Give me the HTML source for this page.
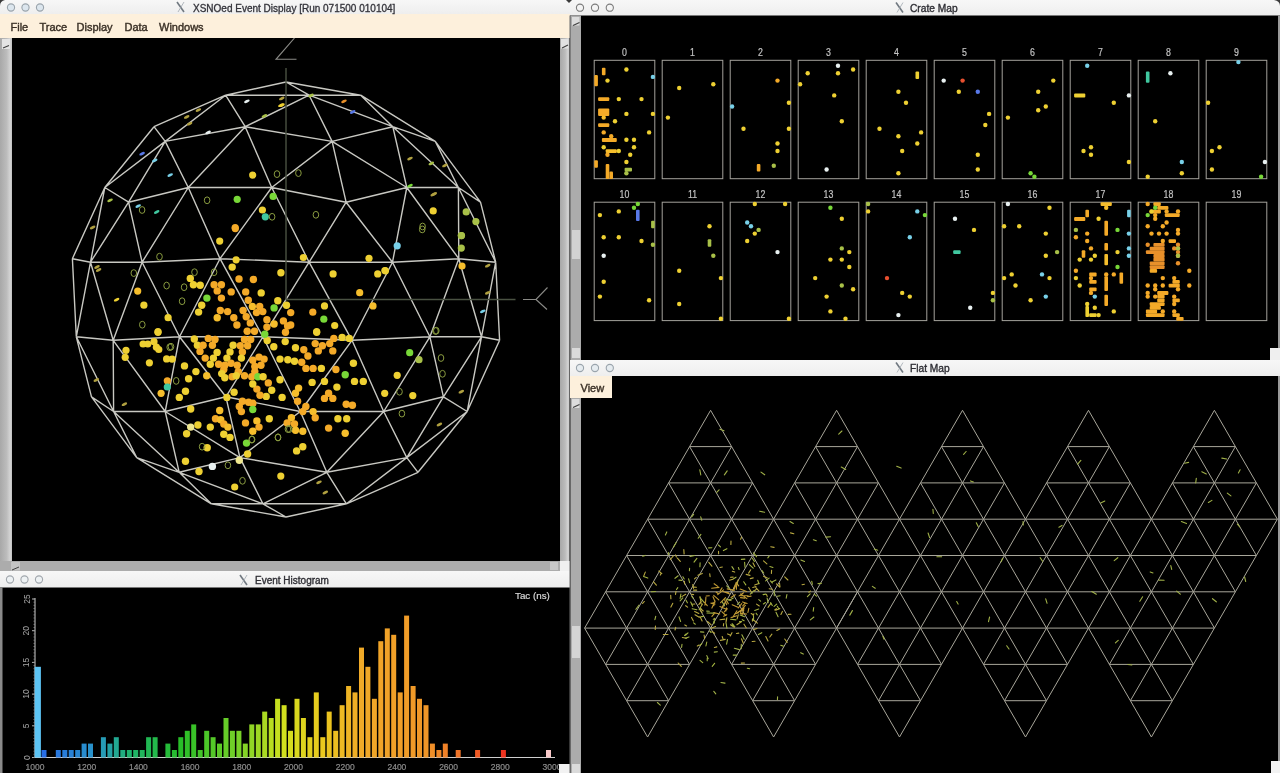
<!DOCTYPE html>
<html><head><meta charset="utf-8"><title>SNOed</title>
<style>
html,body{margin:0;padding:0;background:#000;width:1280px;height:773px;overflow:hidden;font-family:"Liberation Sans",sans-serif;}
.abs{position:absolute;}
svg{position:absolute;left:0;top:0;will-change:transform;}
</style></head><body>
<svg width="1280" height="773" viewBox="0 0 1280 773" style="font-family:'Liberation Sans',sans-serif">
<defs>
<linearGradient id="tb" x1="0" y1="0" x2="0" y2="1"><stop offset="0" stop-color="#f7f7f7"/><stop offset="1" stop-color="#eeeeee"/></linearGradient>
<linearGradient id="sbv" x1="0" y1="0" x2="1" y2="0"><stop offset="0" stop-color="#a8a8a8"/><stop offset="0.55" stop-color="#bcbcbc"/><stop offset="0.85" stop-color="#d4d4d4"/><stop offset="1" stop-color="#c0c0c0"/></linearGradient>
<clipPath id="cl"><rect x="12" y="38" width="548" height="523"/></clipPath>
<clipPath id="cr"><rect x="581" y="15.5" width="696.5" height="344.5"/></clipPath>
<clipPath id="cf"><rect x="581" y="376" width="696.5" height="397"/></clipPath>
</defs>
<rect x="0" y="0" width="1280" height="773" fill="#000"/>

<!-- ============ LEFT MAIN WINDOW ============ -->
<rect x="0" y="0" width="570" height="14" fill="url(#tb)"/>
<rect x="0" y="14" width="570" height="24" fill="#fdf0dc"/>
<circle cx="11" cy="7.5" r="3.6" fill="#dce6ee" stroke="#9aa4ac" stroke-width="1.1"/><circle cx="25.5" cy="7.5" r="3.6" fill="#dce6ee" stroke="#9aa4ac" stroke-width="1.1"/><circle cx="40" cy="7.5" r="3.6" fill="#dce6ee" stroke="#9aa4ac" stroke-width="1.1"/>
<text x="193" y="11.5" font-size="10" fill="#33333a" stroke="#33333a" stroke-width="0.3">XSNOed Event Display [Run 071500 010104]</text>
<path d="M177 2 l7 10" stroke="#707880" stroke-width="1.6" fill="none"/><path d="M184 2 l-6 10" stroke="#a0a8b0" stroke-width="0.8" fill="none"/>
<text font-size="11" fill="#3a3026" stroke="#3a3026" stroke-width="0.4" y="31">
<tspan x="10.5">File</tspan><tspan x="39.5">Trace</tspan><tspan x="76.5">Display</tspan><tspan x="124.5">Data</tspan><tspan x="159">Windows</tspan></text>
<rect x="0" y="38" width="12" height="523" fill="url(#sbv)"/>
<rect x="2" y="39" width="8" height="10" fill="#e4e4e4"/><path d="M3 48 L9 45.5" stroke="#404040" stroke-width="1.1"/>
<rect x="560" y="38" width="9.5" height="523" fill="url(#sbv)"/>
<rect x="561" y="39" width="7.5" height="9.5" fill="#e2e2e2"/><path d="M562 48 L568 45" stroke="#404040" stroke-width="1.1"/>
<rect x="0" y="561" width="560" height="10" fill="#acacac"/>
<rect x="550" y="562" width="8" height="8" fill="#c8c8c8"/><rect x="11" y="562" width="9" height="8.5" fill="#c4c4c4"/><path d="M12 570 L19 567" stroke="#404040" stroke-width="1"/>
<rect x="560" y="561" width="10" height="10" fill="#f0f0f0"/>

<g clip-path="url(#cl)">
<path d="M435.3 141.4L458.4 187.5M480.5 202.2L458.4 187.5M435.3 141.4L480.5 202.2M435.3 141.4L392.8 126.7M458.4 187.5L392.8 126.7M392.8 126.7L406.8 187.5M458.4 187.5L406.8 187.5M392.8 126.7L332.1 141.4M332.1 141.4L406.8 187.5M332.1 141.4L346.1 202.2M406.8 187.5L346.1 202.2M360.7 95.2L392.8 126.7M360.7 95.2L435.3 141.4M360.7 95.2L309.1 95.2M309.1 95.2L392.8 126.7M309.1 95.2L332.1 141.4M286 82L309.1 95.2M286 82L360.7 95.2M495.7 262.2L458.4 187.5M480.5 202.2L495.7 262.2M458.4 187.5L458.8 258.7M495.7 262.2L458.8 258.7M481.5 336.8L458.8 258.7M495.7 262.2L481.5 336.8M458.8 258.7L429.9 336.8M481.5 336.8L429.9 336.8M443.4 396.8L429.9 336.8M481.5 336.8L443.4 396.8M458.8 258.7L406.8 187.5M406.8 187.5L392.5 262.2M458.8 258.7L392.5 262.2M429.9 336.8L392.5 262.2M346.1 202.2L392.5 262.2M495.7 262.2L495.7 262.2M495.7 262.2L480.5 202.2M499.6 340.3L495.7 262.2M495.7 262.2L499.6 340.3M467.2 411.5L499.6 340.3M499.6 340.3L481.5 336.8M467.2 411.5L481.5 336.8M499.6 340.3L467.2 411.5M467.2 411.5L467.2 411.5M467.2 411.5L443.4 396.8M467.2 411.5L418 472.3M346.4 503.8L418 472.3M418 472.3L346.4 503.8M346.4 503.8L346.4 503.8M286 517L346.4 503.8M346.4 503.8L286 517M418 472.3L467.2 411.5M467.2 411.5L406.8 457.6M418 472.3L406.8 457.6M346.4 503.8L406.8 457.6M406.8 457.6L443.4 396.8M225.6 95.2L286 82M76.3 336.8L91.5 396.8M91.5 396.8L136.7 457.6M136.7 457.6L211.3 503.8M211.3 503.8L286 517M104.8 187.5L165.2 141.4M104.8 187.5L128.6 202.2M165.2 141.4L128.6 202.2M154 126.7L165.2 141.4M154 126.7L104.8 187.5M104.8 187.5L154 126.7M104.8 187.5L104.8 187.5M154 126.7L225.6 95.2M225.6 95.2L165.2 141.4M225.6 95.2L225.6 95.2M225.6 95.2L154 126.7M286 82L225.6 95.2M104.8 187.5L90.5 262.2M90.5 262.2L128.6 202.2M72.4 258.7L104.8 187.5M72.4 258.7L90.5 262.2M72.4 258.7L76.3 336.8M76.3 336.8L90.5 262.2M76.3 336.8L72.4 258.7M76.3 336.8L76.3 336.8M91.5 396.8L76.3 336.8M104.8 187.5L72.4 258.7M90.5 262.2L142.1 262.2M128.6 202.2L142.1 262.2M90.5 262.2L113.2 340.3M113.2 340.3L142.1 262.2M113.2 340.3L179.5 336.8M142.1 262.2L179.5 336.8M113.2 340.3L165.2 411.5M165.2 411.5L179.5 336.8M165.2 411.5L225.9 396.8M225.9 396.8L179.5 336.8M76.3 336.8L113.2 340.3M76.3 336.8L113.6 411.5M113.6 411.5L113.2 340.3M113.6 411.5L165.2 411.5M91.5 396.8L113.6 411.5M165.2 411.5L239.9 457.6M239.9 457.6L225.9 396.8M179.2 472.3L165.2 411.5M179.2 472.3L239.9 457.6M262.9 503.8L179.2 472.3M262.9 503.8L239.9 457.6M211.3 503.8L179.2 472.3M211.3 503.8L262.9 503.8M286 517L262.9 503.8M113.6 411.5L179.2 472.3M136.7 457.6L113.6 411.5M136.7 457.6L179.2 472.3M332.1 141.4L271.7 187.5M346.1 202.2L271.7 187.5M245.2 126.7L332.1 141.4M245.2 126.7L271.7 187.5M245.2 126.7L188.3 187.5M188.3 187.5L271.7 187.5M165.2 141.4L245.2 126.7M165.2 141.4L188.3 187.5M128.6 202.2L188.3 187.5M309.1 95.2L245.2 126.7M225.6 95.2L309.1 95.2M225.6 95.2L245.2 126.7M271.7 187.5L309.1 262.2M346.1 202.2L309.1 262.2M271.7 187.5L220 258.7M220 258.7L309.1 262.2M220 258.7L262.9 336.8M262.9 336.8L309.1 262.2M179.5 336.8L220 258.7M179.5 336.8L262.9 336.8M225.9 396.8L262.9 336.8M188.3 187.5L220 258.7M142.1 262.2L188.3 187.5M142.1 262.2L220 258.7M392.5 262.2L309.1 262.2M352 340.3L309.1 262.2M392.5 262.2L352 340.3M429.9 336.8L352 340.3M383.7 411.5L352 340.3M383.7 411.5L429.9 336.8M443.4 396.8L383.7 411.5M352 340.3L262.9 336.8M300.3 411.5L262.9 336.8M300.3 411.5L352 340.3M383.7 411.5L300.3 411.5M225.9 396.8L300.3 411.5M406.8 457.6L383.7 411.5M326.8 472.3L383.7 411.5M406.8 457.6L326.8 472.3M346.4 503.8L326.8 472.3M262.9 503.8L326.8 472.3M346.4 503.8L262.9 503.8M326.8 472.3L300.3 411.5M239.9 457.6L300.3 411.5M326.8 472.3L239.9 457.6" stroke="#c8c8c2" stroke-width="1.4" fill="none"/>
<path d="M286 68 V299.5 H515.5" stroke="#4a5242" stroke-width="1.4" fill="none"/>
<path d="M294.5 38 L276 59.3 H296.5" stroke="#8a8a86" stroke-width="1.1" fill="none"/>
<path d="M523 299.5 H536 L547.5 287.5 M536 299.5 L547 309.5" stroke="#8a8a86" stroke-width="1.1" fill="none"/>
<circle cx="235.3" cy="228.6" r="3.6" fill="#f4aa28"/><circle cx="219.7" cy="241.1" r="3.6" fill="#eed032"/><circle cx="236.1" cy="259.8" r="3.6" fill="#eed032"/><circle cx="137.7" cy="291.1" r="3.6" fill="#f6be2c"/><circle cx="143.9" cy="305.2" r="3.6" fill="#eed032"/><circle cx="168.1" cy="317.7" r="3.6" fill="#eed032"/><circle cx="158" cy="331.7" r="3.6" fill="#eed032"/><circle cx="303.4" cy="257.5" r="3.6" fill="#eed032"/><circle cx="369" cy="258.3" r="3.6" fill="#eed032"/><circle cx="333.1" cy="273.9" r="3.6" fill="#eed032"/><circle cx="377.7" cy="273.9" r="3.6" fill="#eed032"/><circle cx="385.5" cy="270.8" r="3.6" fill="#eed032"/><circle cx="359.7" cy="292.7" r="3.6" fill="#f6be2c"/><circle cx="373" cy="305.9" r="3.6" fill="#f6be2c"/><circle cx="312.8" cy="312.2" r="3.6" fill="#f4aa28"/><circle cx="324.5" cy="305.9" r="3.6" fill="#eed032"/><circle cx="323.8" cy="319.2" r="3.6" fill="#78d838"/><circle cx="334.7" cy="325.5" r="3.6" fill="#eed032"/><circle cx="316.7" cy="331.7" r="3.6" fill="#eed032"/><circle cx="397.2" cy="245.8" r="3.6" fill="#78d0e8"/><circle cx="461.3" cy="235.6" r="3.6" fill="#a8c048"/><circle cx="461.3" cy="248.1" r="3.6" fill="#a8c048"/><circle cx="462" cy="266" r="3.6" fill="#f6be2c"/><circle cx="158" cy="332.3" r="3.6" fill="#eed032"/><circle cx="143.1" cy="344" r="3.6" fill="#eed032"/><circle cx="147.8" cy="344" r="3.6" fill="#eed032"/><circle cx="154" cy="341.7" r="3.6" fill="#eed032"/><circle cx="156.4" cy="347.2" r="3.6" fill="#eed032"/><circle cx="158.8" cy="349.5" r="3.6" fill="#eed032"/><circle cx="126" cy="350.3" r="3.6" fill="#eed032"/><circle cx="125.2" cy="357.3" r="3.6" fill="#eed032"/><circle cx="149.4" cy="362.8" r="3.6" fill="#eed032"/><circle cx="166.6" cy="358.9" r="3.6" fill="#eed032"/><circle cx="161.1" cy="393.3" r="3.6" fill="#f6be2c"/><circle cx="167.3" cy="380.8" r="3.6" fill="#f4aa28"/><circle cx="167.3" cy="387" r="3.6" fill="#40c8a0"/><circle cx="316.7" cy="332.3" r="3.6" fill="#eed032"/><circle cx="409.7" cy="352.7" r="3.6" fill="#78d838"/><circle cx="419" cy="359.7" r="3.6" fill="#a8c048"/><circle cx="397.2" cy="375.3" r="3.6" fill="#eed032"/><circle cx="384.7" cy="393.3" r="3.6" fill="#eed032"/><circle cx="412.8" cy="395.6" r="3.6" fill="#eed032"/><circle cx="280.8" cy="476.1" r="3.6" fill="#eed032"/><circle cx="234.7" cy="487" r="3.6" fill="#eed032"/><circle cx="252.7" cy="175.1" r="3.6" fill="#eed032"/><circle cx="237.2" cy="199.3" r="3.6" fill="#78d838"/><circle cx="273.1" cy="196.4" r="3.6" fill="#78d838"/><circle cx="262.4" cy="210" r="3.6" fill="#eed032"/><circle cx="265.3" cy="216.8" r="3.6" fill="#40c8a0"/><circle cx="235.2" cy="227.5" r="3.6" fill="#f4aa28"/><circle cx="433.2" cy="210.9" r="3.6" fill="#eed032"/><circle cx="466.2" cy="211.9" r="3.6" fill="#a8c048"/><circle cx="475.9" cy="221.6" r="3.6" fill="#a8c048"/><circle cx="461.5" cy="235.6" r="3.6" fill="#a8c048"/><circle cx="384.9" cy="270.5" r="3.6" fill="#eed032"/><circle cx="194.3" cy="339" r="3.7" fill="#eed032"/><circle cx="208.3" cy="338.4" r="3.7" fill="#f4aa28"/><circle cx="215" cy="339.5" r="3.7" fill="#f4aa28"/><circle cx="197.4" cy="345.2" r="3.7" fill="#eed032"/><circle cx="203.1" cy="345.2" r="3.7" fill="#f4aa28"/><circle cx="212.4" cy="345.2" r="3.7" fill="#f4aa28"/><circle cx="200" cy="351.4" r="3.7" fill="#f4aa28"/><circle cx="217.1" cy="352.4" r="3.7" fill="#eed032"/><circle cx="205.2" cy="358.1" r="3.7" fill="#f4aa28"/><circle cx="213.4" cy="358.1" r="3.7" fill="#eed032"/><circle cx="210.3" cy="364.3" r="3.7" fill="#eed032"/><circle cx="218.6" cy="364.3" r="3.7" fill="#f4aa28"/><circle cx="224.8" cy="365.3" r="3.7" fill="#f4aa28"/><circle cx="233.1" cy="345.2" r="3.7" fill="#eed032"/><circle cx="240.3" cy="345.7" r="3.7" fill="#f4aa28"/><circle cx="244.5" cy="339.5" r="3.7" fill="#f4aa28"/><circle cx="250.7" cy="339.5" r="3.7" fill="#f4aa28"/><circle cx="247.6" cy="345.7" r="3.7" fill="#f4aa28"/><circle cx="230" cy="351.9" r="3.7" fill="#eed032"/><circle cx="242.4" cy="351.9" r="3.7" fill="#f4aa28"/><circle cx="226.9" cy="358.1" r="3.7" fill="#eed032"/><circle cx="241.4" cy="358.1" r="3.7" fill="#eed032"/><circle cx="223.8" cy="369.5" r="3.7" fill="#f4aa28"/><circle cx="231" cy="363.3" r="3.7" fill="#f4aa28"/><circle cx="237.2" cy="365.3" r="3.7" fill="#f4aa28"/><circle cx="238.3" cy="371.6" r="3.7" fill="#f4aa28"/><circle cx="221.7" cy="373.6" r="3.7" fill="#eed032"/><circle cx="224.8" cy="377.8" r="3.7" fill="#eed032"/><circle cx="232.1" cy="376.7" r="3.7" fill="#f4aa28"/><circle cx="236.2" cy="375.7" r="3.7" fill="#eed032"/><circle cx="244.5" cy="375.7" r="3.7" fill="#f4aa28"/><circle cx="251.7" cy="376.7" r="3.7" fill="#f4aa28"/><circle cx="252.8" cy="360.2" r="3.7" fill="#f4aa28"/><circle cx="259" cy="357.1" r="3.7" fill="#f4aa28"/><circle cx="264.1" cy="359.1" r="3.7" fill="#f4aa28"/><circle cx="261" cy="365.3" r="3.7" fill="#f4aa28"/><circle cx="254.8" cy="366.4" r="3.7" fill="#f4aa28"/><circle cx="254.8" cy="371.6" r="3.7" fill="#f4aa28"/><circle cx="257.9" cy="376.7" r="3.7" fill="#78d838"/><circle cx="263.1" cy="376.7" r="3.7" fill="#eed032"/><circle cx="268.3" cy="382.9" r="3.7" fill="#f4aa28"/><circle cx="266.2" cy="396.4" r="3.7" fill="#eed032"/><circle cx="260" cy="395.3" r="3.7" fill="#f4aa28"/><circle cx="256.9" cy="389.1" r="3.7" fill="#f4aa28"/><circle cx="252.8" cy="384" r="3.7" fill="#eed032"/><circle cx="184.5" cy="365.9" r="3.7" fill="#eed032"/><circle cx="195.9" cy="371.6" r="3.7" fill="#eed032"/><circle cx="188.6" cy="378.8" r="3.7" fill="#eed032"/><circle cx="206.7" cy="375.7" r="3.7" fill="#f6be2c"/><circle cx="185.5" cy="391.2" r="3.7" fill="#eed032"/><circle cx="179.3" cy="397.4" r="3.7" fill="#eed032"/><circle cx="234.1" cy="392.2" r="3.7" fill="#eed032"/><circle cx="226.9" cy="397.4" r="3.7" fill="#eed032"/><circle cx="172.1" cy="359.1" r="3.7" fill="#eed032"/><circle cx="267.2" cy="340.5" r="3.7" fill="#eed032"/><circle cx="232.2" cy="267.1" r="3.7" fill="#eed032"/><circle cx="239" cy="279" r="3.7" fill="#f4aa28"/><circle cx="253.4" cy="279.5" r="3.7" fill="#f4aa28"/><circle cx="280.9" cy="272.8" r="3.7" fill="#eed032"/><circle cx="190.3" cy="278.4" r="3.7" fill="#eed032"/><circle cx="193.4" cy="284.7" r="3.7" fill="#eed032"/><circle cx="200.2" cy="285.2" r="3.7" fill="#eed032"/><circle cx="214.1" cy="284.7" r="3.7" fill="#f4aa28"/><circle cx="221.4" cy="284.7" r="3.7" fill="#f4aa28"/><circle cx="217.2" cy="290.9" r="3.7" fill="#f4aa28"/><circle cx="221.4" cy="298.1" r="3.7" fill="#f4aa28"/><circle cx="206.9" cy="298.1" r="3.7" fill="#78d838"/><circle cx="201.7" cy="305.3" r="3.7" fill="#eed032"/><circle cx="198.6" cy="312.1" r="3.7" fill="#eed032"/><circle cx="231.2" cy="291.9" r="3.7" fill="#f4aa28"/><circle cx="245.7" cy="291.9" r="3.7" fill="#f4aa28"/><circle cx="261.2" cy="292.9" r="3.7" fill="#eed032"/><circle cx="277.8" cy="300.7" r="3.7" fill="#eed032"/><circle cx="274.1" cy="307.9" r="3.7" fill="#78d838"/><circle cx="286.5" cy="305.3" r="3.7" fill="#eed032"/><circle cx="290.7" cy="312.6" r="3.7" fill="#f4aa28"/><circle cx="248.3" cy="300.2" r="3.7" fill="#f4aa28"/><circle cx="252.4" cy="306.4" r="3.7" fill="#f6be2c"/><circle cx="259.7" cy="306.4" r="3.7" fill="#f4aa28"/><circle cx="256.5" cy="312.6" r="3.7" fill="#f4aa28"/><circle cx="262.8" cy="311.6" r="3.7" fill="#f4aa28"/><circle cx="266.9" cy="319.8" r="3.7" fill="#f4aa28"/><circle cx="266.9" cy="327.1" r="3.7" fill="#f4aa28"/><circle cx="274.1" cy="324" r="3.7" fill="#f6be2c"/><circle cx="283.4" cy="320.9" r="3.7" fill="#f4aa28"/><circle cx="287.6" cy="326" r="3.7" fill="#f4aa28"/><circle cx="285.5" cy="332.2" r="3.7" fill="#f4aa28"/><circle cx="290.7" cy="325" r="3.7" fill="#f4aa28"/><circle cx="220.3" cy="310.5" r="3.7" fill="#f4aa28"/><circle cx="227.6" cy="311.6" r="3.7" fill="#f4aa28"/><circle cx="217.2" cy="317.8" r="3.7" fill="#f6be2c"/><circle cx="233.8" cy="317.8" r="3.7" fill="#f4aa28"/><circle cx="236.9" cy="325" r="3.7" fill="#f4aa28"/><circle cx="243.1" cy="310.5" r="3.7" fill="#f4aa28"/><circle cx="246.2" cy="316.7" r="3.7" fill="#f4aa28"/><circle cx="250.3" cy="322.9" r="3.7" fill="#f4aa28"/><circle cx="247.2" cy="331.2" r="3.7" fill="#f4aa28"/><circle cx="254.5" cy="331.2" r="3.7" fill="#f4aa28"/><circle cx="264.8" cy="334.3" r="3.7" fill="#78d838"/><circle cx="273.8" cy="346.7" r="3.7" fill="#eed032"/><circle cx="285.2" cy="341.6" r="3.7" fill="#eed032"/><circle cx="295.5" cy="347.8" r="3.7" fill="#eed032"/><circle cx="303.8" cy="349.8" r="3.7" fill="#f4aa28"/><circle cx="307.9" cy="356" r="3.7" fill="#f4aa28"/><circle cx="294.5" cy="361.2" r="3.7" fill="#eed032"/><circle cx="301.7" cy="362.2" r="3.7" fill="#f4aa28"/><circle cx="305.9" cy="368.4" r="3.7" fill="#f4aa28"/><circle cx="313.1" cy="368.4" r="3.7" fill="#f4aa28"/><circle cx="321.4" cy="368.4" r="3.7" fill="#eed032"/><circle cx="280" cy="359.1" r="3.7" fill="#eed032"/><circle cx="287.8" cy="359.7" r="3.7" fill="#eed032"/><circle cx="315.2" cy="343.6" r="3.7" fill="#f4aa28"/><circle cx="322.4" cy="345.7" r="3.7" fill="#f4aa28"/><circle cx="318.3" cy="350.9" r="3.7" fill="#f4aa28"/><circle cx="329.7" cy="343.6" r="3.7" fill="#f4aa28"/><circle cx="333.8" cy="338.4" r="3.7" fill="#f4aa28"/><circle cx="332.8" cy="350.9" r="3.7" fill="#f4aa28"/><circle cx="342.1" cy="337.4" r="3.7" fill="#eed032"/><circle cx="349.3" cy="338.4" r="3.7" fill="#eed032"/><circle cx="353.4" cy="363.3" r="3.7" fill="#eed032"/><circle cx="335.9" cy="369.5" r="3.7" fill="#f4aa28"/><circle cx="345.2" cy="374.7" r="3.7" fill="#78d838"/><circle cx="354.5" cy="381.4" r="3.7" fill="#eed032"/><circle cx="363.3" cy="381.4" r="3.7" fill="#eed032"/><circle cx="324.5" cy="381.4" r="3.7" fill="#eed032"/><circle cx="312.1" cy="382.4" r="3.7" fill="#eed032"/><circle cx="336.9" cy="387.1" r="3.7" fill="#eed032"/><circle cx="328.6" cy="393.3" r="3.7" fill="#f4aa28"/><circle cx="324.5" cy="398.4" r="3.7" fill="#f4aa28"/><circle cx="332.8" cy="398.4" r="3.7" fill="#f4aa28"/><circle cx="298.6" cy="388.1" r="3.7" fill="#f6be2c"/><circle cx="295.5" cy="393.3" r="3.7" fill="#f6be2c"/><circle cx="280" cy="379.8" r="3.7" fill="#eed032"/><circle cx="282.1" cy="397.4" r="3.7" fill="#eed032"/><circle cx="271.7" cy="390.2" r="3.7" fill="#eed032"/><circle cx="190.7" cy="409" r="3.7" fill="#eed032"/><circle cx="219.7" cy="410.5" r="3.7" fill="#f6be2c"/><circle cx="215.5" cy="418.8" r="3.7" fill="#f4aa28"/><circle cx="220.7" cy="419.8" r="3.7" fill="#f6be2c"/><circle cx="223.8" cy="424" r="3.7" fill="#f4aa28"/><circle cx="227.9" cy="427.1" r="3.7" fill="#f6be2c"/><circle cx="197.9" cy="425" r="3.7" fill="#eed032"/><circle cx="210.3" cy="427.1" r="3.7" fill="#eed032"/><circle cx="190.7" cy="427.1" r="3.7" fill="#f0e890"/><circle cx="186.6" cy="433.8" r="3.7" fill="#eed032"/><circle cx="223.8" cy="434.3" r="3.7" fill="#eed032"/><circle cx="230" cy="437.4" r="3.7" fill="#eed032"/><circle cx="242.4" cy="401.2" r="3.7" fill="#f4aa28"/><circle cx="239.3" cy="406.4" r="3.7" fill="#f4aa28"/><circle cx="241.4" cy="411.6" r="3.7" fill="#f4aa28"/><circle cx="248.6" cy="402.2" r="3.7" fill="#f4aa28"/><circle cx="252.8" cy="403.3" r="3.7" fill="#f4aa28"/><circle cx="252.8" cy="409.5" r="3.7" fill="#78d838"/><circle cx="269.3" cy="418.8" r="3.7" fill="#eed032"/><circle cx="245.5" cy="422.9" r="3.7" fill="#f4aa28"/><circle cx="256.9" cy="420.9" r="3.7" fill="#f6be2c"/><circle cx="259" cy="427.1" r="3.7" fill="#f4aa28"/><circle cx="252.8" cy="431.2" r="3.7" fill="#f6be2c"/><circle cx="246.5" cy="443.1" r="3.7" fill="#78d838"/><circle cx="247.6" cy="454" r="3.7" fill="#eed032"/><circle cx="239.3" cy="460.2" r="3.7" fill="#f0e890"/><circle cx="207.2" cy="447.8" r="3.7" fill="#eed032"/><circle cx="185.5" cy="461.2" r="3.7" fill="#eed032"/><circle cx="212.4" cy="466.4" r="3.7" fill="#e8f0f0"/><circle cx="199" cy="471.5" r="3.7" fill="#eed032"/><circle cx="297.6" cy="401.2" r="3.7" fill="#f4aa28"/><circle cx="291.4" cy="417.8" r="3.7" fill="#f6be2c"/><circle cx="287.2" cy="422.9" r="3.7" fill="#f4aa28"/><circle cx="294.5" cy="424" r="3.7" fill="#f4aa28"/><circle cx="295.5" cy="430.2" r="3.7" fill="#f6be2c"/><circle cx="302.8" cy="431.2" r="3.7" fill="#f6be2c"/><circle cx="305.9" cy="406.4" r="3.7" fill="#f4aa28"/><circle cx="302.8" cy="411.6" r="3.7" fill="#f4aa28"/><circle cx="313.1" cy="411.6" r="3.7" fill="#f6be2c"/><circle cx="315.2" cy="417.8" r="3.7" fill="#f4aa28"/><circle cx="346.2" cy="404.3" r="3.7" fill="#f4aa28"/><circle cx="352.4" cy="405.3" r="3.7" fill="#f4aa28"/><circle cx="337.9" cy="418.8" r="3.7" fill="#eed032"/><circle cx="346.7" cy="418.8" r="3.7" fill="#eed032"/><circle cx="328.6" cy="428.1" r="3.7" fill="#f4aa28"/><circle cx="345.2" cy="433.3" r="3.7" fill="#f6be2c"/><circle cx="296.6" cy="450.9" r="3.7" fill="#eed032"/><circle cx="302.8" cy="446.7" r="3.7" fill="#eed032"/><ellipse cx="154.7" cy="160.5" rx="3" ry="1.4" fill="#78d0e8" transform="rotate(-25 154.7 160.5)"/><ellipse cx="170.2" cy="175.1" rx="3" ry="1.4" fill="#78d0e8" transform="rotate(-25 170.2 175.1)"/><ellipse cx="246.9" cy="101.3" rx="3" ry="1.4" fill="#e8f0f0" transform="rotate(-25 246.9 101.3)"/><ellipse cx="280.9" cy="105.2" rx="3" ry="1.4" fill="#eed032" transform="rotate(-25 280.9 105.2)"/><ellipse cx="281.8" cy="98.4" rx="3" ry="1.4" fill="#b0a040" transform="rotate(-25 281.8 98.4)"/><ellipse cx="264.4" cy="115.9" rx="3" ry="1.4" fill="#a8c048" transform="rotate(-25 264.4 115.9)"/><ellipse cx="208.1" cy="132.4" rx="3" ry="1.4" fill="#e8f0f0" transform="rotate(-25 208.1 132.4)"/><ellipse cx="186.7" cy="116.9" rx="3" ry="1.4" fill="#b0a040" transform="rotate(-25 186.7 116.9)"/><ellipse cx="198.4" cy="110.1" rx="3" ry="1.4" fill="#b0a040" transform="rotate(-25 198.4 110.1)"/><ellipse cx="189.6" cy="123.7" rx="3" ry="1.4" fill="#b0a040" transform="rotate(-25 189.6 123.7)"/><ellipse cx="142.1" cy="153.7" rx="3" ry="1.4" fill="#5878e8" transform="rotate(-25 142.1 153.7)"/><ellipse cx="110.1" cy="200.3" rx="3" ry="1.4" fill="#a8c048" transform="rotate(-25 110.1 200.3)"/><ellipse cx="138.2" cy="206.1" rx="3" ry="1.4" fill="#78d0e8" transform="rotate(-25 138.2 206.1)"/><ellipse cx="156.7" cy="212" rx="3" ry="1.4" fill="#40c8a0" transform="rotate(-25 156.7 212)"/><ellipse cx="92.6" cy="227.5" rx="3" ry="1.4" fill="#b0a040" transform="rotate(-25 92.6 227.5)"/><ellipse cx="344" cy="101.3" rx="3" ry="1.4" fill="#e8902a" transform="rotate(-25 344 101.3)"/><ellipse cx="352.7" cy="112" rx="3" ry="1.4" fill="#5878e8" transform="rotate(-25 352.7 112)"/><ellipse cx="282" cy="105.2" rx="3" ry="1.4" fill="#eed032" transform="rotate(-25 282 105.2)"/><ellipse cx="311" cy="95.5" rx="3" ry="1.4" fill="#a8c048" transform="rotate(-25 311 95.5)"/><ellipse cx="410" cy="185.7" rx="3" ry="1.4" fill="#78d838" transform="rotate(-25 410 185.7)"/><ellipse cx="410" cy="158.6" rx="3" ry="1.4" fill="#b0a040" transform="rotate(-25 410 158.6)"/><ellipse cx="431.3" cy="163.4" rx="3" ry="1.4" fill="#a8c048" transform="rotate(-25 431.3 163.4)"/><ellipse cx="433.2" cy="194.5" rx="3" ry="1.4" fill="#b0a040" transform="rotate(-25 433.2 194.5)"/><ellipse cx="444.9" cy="165.4" rx="3" ry="1.4" fill="#b0a040" transform="rotate(-25 444.9 165.4)"/><ellipse cx="487.7" cy="265.7" rx="3" ry="1.4" fill="#b0a040" transform="rotate(-25 487.7 265.7)"/><ellipse cx="487.7" cy="292.8" rx="3" ry="1.4" fill="#b0a040" transform="rotate(-25 487.7 292.8)"/><ellipse cx="482.8" cy="311.3" rx="3" ry="1.4" fill="#78d0e8" transform="rotate(-25 482.8 311.3)"/><ellipse cx="434.3" cy="193.9" rx="3" ry="1.4" fill="#b0a040" transform="rotate(-25 434.3 193.9)"/><ellipse cx="461.3" cy="391.7" rx="3" ry="1.4" fill="#b0a040" transform="rotate(-25 461.3 391.7)"/><ellipse cx="439.4" cy="424.5" rx="3" ry="1.4" fill="#b0a040" transform="rotate(-25 439.4 424.5)"/><ellipse cx="319" cy="482.3" rx="3" ry="1.4" fill="#b0a040" transform="rotate(-25 319 482.3)"/><ellipse cx="325.3" cy="492.5" rx="3" ry="1.4" fill="#b0a040" transform="rotate(-25 325.3 492.5)"/><ellipse cx="124.4" cy="404.2" rx="3" ry="1.4" fill="#b0a040" transform="rotate(-25 124.4 404.2)"/><ellipse cx="96.3" cy="380" rx="3" ry="1.4" fill="#b0a040" transform="rotate(-25 96.3 380)"/><ellipse cx="98.6" cy="270" rx="3" ry="1.4" fill="#b0a040" transform="rotate(-25 98.6 270)"/><ellipse cx="97" cy="267" rx="3" ry="1.4" fill="#b0a040" transform="rotate(-25 97 267)"/><ellipse cx="116.6" cy="299.7" rx="3" ry="1.4" fill="#eed032" transform="rotate(-25 116.6 299.7)"/><ellipse cx="159.5" cy="256.7" rx="2.8" ry="3.4" fill="none" stroke="#8a9c40" stroke-width="1"/><ellipse cx="133.8" cy="273.1" rx="2.8" ry="3.4" fill="none" stroke="#8a9c40" stroke-width="1"/><ellipse cx="166.6" cy="285.6" rx="2.8" ry="3.4" fill="none" stroke="#8a9c40" stroke-width="1"/><ellipse cx="142.3" cy="324.7" rx="2.8" ry="3.4" fill="none" stroke="#8a9c40" stroke-width="1"/><ellipse cx="422.2" cy="229.4" rx="2.8" ry="3.4" fill="none" stroke="#8a9c40" stroke-width="1"/><ellipse cx="435.5" cy="331" rx="2.8" ry="3.4" fill="none" stroke="#8a9c40" stroke-width="1"/><ellipse cx="169.7" cy="347.2" rx="2.8" ry="3.4" fill="none" stroke="#8a9c40" stroke-width="1"/><ellipse cx="399.5" cy="391.7" rx="2.8" ry="3.4" fill="none" stroke="#8a9c40" stroke-width="1"/><ellipse cx="401.9" cy="413.6" rx="2.8" ry="3.4" fill="none" stroke="#8a9c40" stroke-width="1"/><ellipse cx="442.5" cy="373.8" rx="2.8" ry="3.4" fill="none" stroke="#8a9c40" stroke-width="1"/><ellipse cx="441" cy="358" rx="2.8" ry="3.4" fill="none" stroke="#8a9c40" stroke-width="1"/><ellipse cx="242.5" cy="480.8" rx="2.8" ry="3.4" fill="none" stroke="#8a9c40" stroke-width="1"/><ellipse cx="277" cy="174.1" rx="2.8" ry="3.4" fill="none" stroke="#8a9c40" stroke-width="1"/><ellipse cx="207.1" cy="200.3" rx="2.8" ry="3.4" fill="none" stroke="#8a9c40" stroke-width="1"/><ellipse cx="272.1" cy="216.8" rx="2.8" ry="3.4" fill="none" stroke="#8a9c40" stroke-width="1"/><ellipse cx="142.1" cy="210" rx="2.8" ry="3.4" fill="none" stroke="#8a9c40" stroke-width="1"/><ellipse cx="298.4" cy="173.1" rx="2.8" ry="3.4" fill="none" stroke="#8a9c40" stroke-width="1"/><ellipse cx="315.9" cy="214.8" rx="2.8" ry="3.4" fill="none" stroke="#8a9c40" stroke-width="1"/><ellipse cx="422.6" cy="226.5" rx="2.8" ry="3.4" fill="none" stroke="#8a9c40" stroke-width="1"/><ellipse cx="436.3" cy="330.7" rx="2.8" ry="3.4" fill="none" stroke="#8a9c40" stroke-width="1"/><ellipse cx="176.2" cy="380.9" rx="2.8" ry="3.4" fill="none" stroke="#8a9c40" stroke-width="1"/><ellipse cx="171" cy="346.7" rx="2.8" ry="3.4" fill="none" stroke="#8a9c40" stroke-width="1"/><ellipse cx="194.5" cy="272.2" rx="2.8" ry="3.4" fill="none" stroke="#8a9c40" stroke-width="1"/><ellipse cx="214.1" cy="272.2" rx="2.8" ry="3.4" fill="none" stroke="#8a9c40" stroke-width="1"/><ellipse cx="184.1" cy="287.2" rx="2.8" ry="3.4" fill="none" stroke="#8a9c40" stroke-width="1"/><ellipse cx="182.1" cy="301.2" rx="2.8" ry="3.4" fill="none" stroke="#8a9c40" stroke-width="1"/><ellipse cx="278.1" cy="437.4" rx="2.8" ry="3.4" fill="none" stroke="#8a9c40" stroke-width="1"/><ellipse cx="227.9" cy="465.3" rx="2.8" ry="3.4" fill="none" stroke="#8a9c40" stroke-width="1"/><ellipse cx="202.1" cy="446.7" rx="2.8" ry="3.4" fill="none" stroke="#8a9c40" stroke-width="1"/><ellipse cx="251.7" cy="439.5" rx="2.8" ry="3.4" fill="none" stroke="#8a9c40" stroke-width="1"/><ellipse cx="287.9" cy="429.1" rx="2.8" ry="3.4" fill="none" stroke="#8a9c40" stroke-width="1"/><ellipse cx="277.9" cy="437.4" rx="2.8" ry="3.4" fill="none" stroke="#8a9c40" stroke-width="1"/><ellipse cx="289.3" cy="429.1" rx="2.8" ry="3.4" fill="none" stroke="#8a9c40" stroke-width="1"/><ellipse cx="252.1" cy="439.5" rx="2.8" ry="3.4" fill="none" stroke="#8a9c40" stroke-width="1"/>

</g>
<!-- ============ HISTOGRAM WINDOW ============ -->
<rect x="0" y="571" width="570" height="16.5" fill="url(#tb)"/>
<circle cx="10" cy="579.5" r="3.6" fill="#eef2f4" stroke="#a0a6ac" stroke-width="1.1"/><circle cx="24.5" cy="579.5" r="3.6" fill="#eef2f4" stroke="#a0a6ac" stroke-width="1.1"/><circle cx="39" cy="579.5" r="3.6" fill="#eef2f4" stroke="#a0a6ac" stroke-width="1.1"/>
<text x="255" y="584" font-size="10" fill="#2e2e34" stroke="#2e2e34" stroke-width="0.35">Event Histogram</text>
<path d="M240 575 l7 10" stroke="#707880" stroke-width="1.6" fill="none"/><path d="M247 575 l-6 10" stroke="#a0a8b0" stroke-width="0.8" fill="none"/>
<rect x="0" y="587.5" width="2.5" height="186" fill="#8a8a8a"/>
<path d="M35 598 V757.5 H555" stroke="#cfcfcf" stroke-width="1" fill="none"/>
<rect x="34.6" y="666.8" width="6.3" height="90.7" fill="#5cc4f4"/><rect x="41.5" y="750" width="5" height="7.5" fill="#286ee6"/><rect x="55.8" y="750" width="5" height="7.5" fill="#2878de"/><rect x="62.3" y="750" width="5" height="7.5" fill="#287dda"/><rect x="68.7" y="750" width="5" height="7.5" fill="#2882d7"/><rect x="75.2" y="750" width="5" height="7.5" fill="#2887d3"/><rect x="81.6" y="743.6" width="5" height="13.9" fill="#288ccf"/><rect x="88" y="743.6" width="5" height="13.9" fill="#2891cb"/><rect x="100.9" y="737.2" width="5" height="20.3" fill="#269cb6"/><rect x="107.4" y="743.6" width="5" height="13.9" fill="#24a2a4"/><rect x="113.8" y="737.2" width="5" height="20.3" fill="#22a892"/><rect x="120.3" y="750" width="5" height="7.5" fill="#20ae80"/><rect x="126.8" y="750" width="5" height="7.5" fill="#1eb46e"/><rect x="133.2" y="750" width="5" height="7.5" fill="#1fb565"/><rect x="139.7" y="750" width="5" height="7.5" fill="#20b65c"/><rect x="146.1" y="737.2" width="5" height="20.3" fill="#21b753"/><rect x="152.6" y="737.2" width="5" height="20.3" fill="#23b94b"/><rect x="165.4" y="743.6" width="5" height="13.9" fill="#25bb39"/><rect x="171.9" y="750" width="5" height="7.5" fill="#26bc30"/><rect x="178.3" y="737.2" width="5" height="20.3" fill="#28be28"/><rect x="184.8" y="730.8" width="5" height="26.7" fill="#30c028"/><rect x="191.2" y="724.4" width="5" height="33.1" fill="#39c228"/><rect x="197.7" y="750" width="5" height="7.5" fill="#42c428"/><rect x="204.2" y="730.8" width="5" height="26.7" fill="#4bc628"/><rect x="210.6" y="737.2" width="5" height="20.3" fill="#54c928"/><rect x="217" y="743.6" width="5" height="13.9" fill="#5dcb28"/><rect x="223.5" y="718" width="5" height="39.5" fill="#66cd28"/><rect x="229.9" y="730.8" width="5" height="26.7" fill="#6fcf28"/><rect x="236.4" y="730.8" width="5" height="26.7" fill="#78d228"/><rect x="242.8" y="743.6" width="5" height="13.9" fill="#84d426"/><rect x="249.3" y="724.4" width="5" height="33.1" fill="#91d625"/><rect x="255.8" y="724.4" width="5" height="33.1" fill="#9ed823"/><rect x="262.2" y="711.6" width="5" height="45.9" fill="#abda22"/><rect x="268.7" y="718" width="5" height="39.5" fill="#b8dc20"/><rect x="275.1" y="698.8" width="5" height="58.7" fill="#c5de1f"/><rect x="281.6" y="705.2" width="5" height="52.3" fill="#d2e11e"/><rect x="288" y="730.8" width="5" height="26.7" fill="#d6dc1e"/><rect x="294.5" y="698.8" width="5" height="58.7" fill="#dad81e"/><rect x="300.9" y="718" width="5" height="39.5" fill="#ded41e"/><rect x="307.4" y="737.2" width="5" height="20.3" fill="#e2d01e"/><rect x="313.8" y="692.4" width="5" height="65.1" fill="#e6cc1e"/><rect x="320.3" y="737.2" width="5" height="20.3" fill="#ebc81e"/><rect x="326.7" y="711.6" width="5" height="45.9" fill="#ebc31f"/><rect x="333.2" y="730.8" width="5" height="26.7" fill="#ecbe21"/><rect x="339.6" y="705.2" width="5" height="52.3" fill="#edb923"/><rect x="346.1" y="686" width="5" height="71.5" fill="#eeb424"/><rect x="352.5" y="692.4" width="5" height="65.1" fill="#efaf26"/><rect x="359" y="647.6" width="5" height="109.9" fill="#f0aa28"/><rect x="365.4" y="666.8" width="5" height="90.7" fill="#f0a828"/><rect x="371.9" y="698.8" width="5" height="58.7" fill="#f0a628"/><rect x="378.3" y="641.2" width="5" height="116.3" fill="#f0a428"/><rect x="384.8" y="628.4" width="5" height="129.1" fill="#f0a228"/><rect x="391.2" y="634.8" width="5" height="122.7" fill="#f0a028"/><rect x="397.7" y="692.4" width="5" height="65.1" fill="#f09e28"/><rect x="404.1" y="615.6" width="5" height="141.9" fill="#f09c28"/><rect x="410.6" y="686" width="5" height="71.5" fill="#f09a28"/><rect x="417" y="698.8" width="5" height="58.7" fill="#f09828"/><rect x="423.5" y="705.2" width="5" height="52.3" fill="#f09628"/><rect x="429.9" y="743.6" width="5" height="13.9" fill="#f08f28"/><rect x="436.4" y="750" width="5" height="7.5" fill="#f08828"/><rect x="442.8" y="743.6" width="5" height="13.9" fill="#f08228"/><rect x="455.7" y="750" width="5" height="7.5" fill="#f07428"/><rect x="475.1" y="750" width="5" height="7.5" fill="#f05a24"/><rect x="500.9" y="750" width="5" height="7.5" fill="#f0321e"/><rect x="546" y="750" width="5" height="7.5" fill="#f8c8c8"/>
<text x="515" y="599" font-size="9.8" fill="#d8d8d8" stroke="#d8d8d8" stroke-width="0.2">Tac (ns)</text>
<text x="35.0" y="770" font-size="8.5" fill="#8c8c8c" text-anchor="middle" stroke="#8c8c8c" stroke-width="0.2">1000</text>
<text x="86.7" y="770" font-size="8.5" fill="#8c8c8c" text-anchor="middle" stroke="#8c8c8c" stroke-width="0.2">1200</text>
<text x="138.4" y="770" font-size="8.5" fill="#8c8c8c" text-anchor="middle" stroke="#8c8c8c" stroke-width="0.2">1400</text>
<text x="190.1" y="770" font-size="8.5" fill="#8c8c8c" text-anchor="middle" stroke="#8c8c8c" stroke-width="0.2">1600</text>
<text x="241.8" y="770" font-size="8.5" fill="#8c8c8c" text-anchor="middle" stroke="#8c8c8c" stroke-width="0.2">1800</text>
<text x="293.5" y="770" font-size="8.5" fill="#8c8c8c" text-anchor="middle" stroke="#8c8c8c" stroke-width="0.2">2000</text>
<text x="345.2" y="770" font-size="8.5" fill="#8c8c8c" text-anchor="middle" stroke="#8c8c8c" stroke-width="0.2">2200</text>
<text x="396.9" y="770" font-size="8.5" fill="#8c8c8c" text-anchor="middle" stroke="#8c8c8c" stroke-width="0.2">2400</text>
<text x="448.6" y="770" font-size="8.5" fill="#8c8c8c" text-anchor="middle" stroke="#8c8c8c" stroke-width="0.2">2600</text>
<text x="500.3" y="770" font-size="8.5" fill="#8c8c8c" text-anchor="middle" stroke="#8c8c8c" stroke-width="0.2">2800</text>
<text x="552.0" y="770" font-size="8.5" fill="#8c8c8c" text-anchor="middle" stroke="#8c8c8c" stroke-width="0.2">3000</text>
<text x="29.5" y="757.5" font-size="8.5" fill="#a8a8a8" text-anchor="middle" transform="rotate(-90 29.5 757.5)">0</text>
<path d="M32 757.5H35" stroke="#b0b0b0" stroke-width="1"/>
<text x="29.5" y="725.8" font-size="8.5" fill="#a8a8a8" text-anchor="middle" transform="rotate(-90 29.5 725.8)">5</text>
<path d="M32 725.8H35" stroke="#b0b0b0" stroke-width="1"/>
<text x="29.5" y="694.1" font-size="8.5" fill="#a8a8a8" text-anchor="middle" transform="rotate(-90 29.5 694.1)">10</text>
<path d="M32 694.1H35" stroke="#b0b0b0" stroke-width="1"/>
<text x="29.5" y="662.4" font-size="8.5" fill="#a8a8a8" text-anchor="middle" transform="rotate(-90 29.5 662.4)">15</text>
<path d="M32 662.4H35" stroke="#b0b0b0" stroke-width="1"/>
<text x="29.5" y="630.7" font-size="8.5" fill="#a8a8a8" text-anchor="middle" transform="rotate(-90 29.5 630.7)">20</text>
<path d="M32 630.7H35" stroke="#b0b0b0" stroke-width="1"/>
<text x="29.5" y="599.0" font-size="8.5" fill="#a8a8a8" text-anchor="middle" transform="rotate(-90 29.5 599.0)">25</text>
<path d="M32 599.0H35" stroke="#b0b0b0" stroke-width="1"/>
<path d="M33.5 757.5H35M33.5 754.3H35M33.5 751.2H35M33.5 748.0H35M33.5 744.8H35M33.5 741.6H35M33.5 738.5H35M33.5 735.3H35M33.5 732.1H35M33.5 729.0H35M33.5 725.8H35M33.5 722.6H35M33.5 719.5H35M33.5 716.3H35M33.5 713.1H35M33.5 710.0H35M33.5 706.8H35M33.5 703.6H35M33.5 700.4H35M33.5 697.3H35M33.5 694.1H35M33.5 690.9H35M33.5 687.8H35M33.5 684.6H35M33.5 681.4H35M33.5 678.2H35M33.5 675.1H35M33.5 671.9H35M33.5 668.7H35M33.5 665.6H35M33.5 662.4H35M33.5 659.2H35M33.5 656.1H35M33.5 652.9H35M33.5 649.7H35M33.5 646.5H35M33.5 643.4H35M33.5 640.2H35M33.5 637.0H35M33.5 633.9H35M33.5 630.7H35M33.5 627.5H35M33.5 624.4H35M33.5 621.2H35M33.5 618.0H35M33.5 614.9H35M33.5 611.7H35M33.5 608.5H35M33.5 605.3H35M33.5 602.2H35M33.5 599.0H35" stroke="#909090" stroke-width="0.8"/>
<rect x="559" y="764" width="11" height="9" fill="#f2f2f2"/>

<!-- ============ CRATE MAP WINDOW ============ -->
<rect x="570" y="0" width="710" height="15.5" fill="url(#tb)"/>
<circle cx="580" cy="7.7" r="3.6" fill="#f4f4f4" stroke="#7c7c7c" stroke-width="1.1"/><circle cx="595" cy="7.7" r="3.6" fill="#f4f4f4" stroke="#7c7c7c" stroke-width="1.1"/><circle cx="609.8" cy="7.7" r="3.6" fill="#f4f4f4" stroke="#7c7c7c" stroke-width="1.1"/>
<text x="910" y="11.8" font-size="10.2" fill="#2e2e34" stroke="#2e2e34" stroke-width="0.35">Crate Map</text>
<path d="M896 2.5 l7 10" stroke="#707880" stroke-width="1.6" fill="none"/><path d="M903 2.5 l-6 10" stroke="#a0a8b0" stroke-width="0.8" fill="none"/>
<rect x="570" y="15.5" width="11" height="344.5" fill="#acacac"/>
<rect x="569.5" y="15.5" width="1.2" height="757.5" fill="#6c6c6c"/>
<rect x="572" y="17" width="7.5" height="8.5" fill="#dcdcdc"/><path d="M573 25.5 L579.5 22.5" stroke="#404040" stroke-width="1.2"/>
<rect x="572" y="230" width="8" height="29" fill="#d2d2d2"/>
<rect x="572" y="348" width="8" height="10" fill="#dadada"/>
<rect x="1278" y="15.5" width="2" height="344.5" fill="#9a9a9a"/>
<rect x="1270" y="348" width="10" height="12" fill="#efefef"/>
<rect x="594.2" y="60.3" width="60.6" height="118.4" fill="none" stroke="#a4a29c" stroke-width="1"/><text x="780.6" y="56" font-size="11" fill="#c4c4c4" stroke="#c4c4c4" stroke-width="0.2" text-anchor="middle" transform="translate(0 0) scale(0.8 1)">0</text><rect x="601.9" y="67.8" width="3.6" height="7.5" rx="1" fill="#f4aa28"/><circle cx="626.4" cy="69.5" r="2.2" fill="#eed032"/><rect x="594.3" y="75.1" width="3.6" height="11.2" rx="1" fill="#f4aa28"/><circle cx="607.5" cy="80.6" r="2.2" fill="#eed032"/><circle cx="652.9" cy="76.9" r="2.2" fill="#78d0e8"/><rect x="598.1" y="97.3" width="11.2" height="3.8" rx="1" fill="#f4aa28"/><circle cx="618.8" cy="99.1" r="2.2" fill="#eed032"/><circle cx="641.5" cy="99.1" r="2.2" fill="#eed032"/><rect x="598.1" y="108.5" width="11.2" height="7.5" rx="1" fill="#f4aa28"/><circle cx="603.7" cy="117.6" r="2.2" fill="#f6be2c"/><circle cx="626.4" cy="113.9" r="2.2" fill="#eed032"/><circle cx="652.9" cy="113.9" r="2.2" fill="#eed032"/><circle cx="615" cy="121.3" r="2.2" fill="#eed032"/><rect x="598.1" y="123.2" width="11.2" height="3.8" rx="1" fill="#f4aa28"/><circle cx="603.7" cy="132.4" r="2.2" fill="#f4aa28"/><circle cx="649.1" cy="132.4" r="2.2" fill="#eed032"/><circle cx="611.2" cy="136.2" r="2.2" fill="#f4aa28"/><rect x="601.9" y="138.1" width="14.9" height="3.8" rx="1" fill="#f4aa28"/><circle cx="626.4" cy="139.8" r="2.2" fill="#eed032"/><circle cx="634" cy="139.8" r="2.2" fill="#eed032"/><circle cx="603.7" cy="147.2" r="2.2" fill="#eed032"/><circle cx="634" cy="147.2" r="2.2" fill="#eed032"/><circle cx="618.8" cy="151" r="2.2" fill="#eed032"/><rect x="605.7" y="149.2" width="11.2" height="3.8" rx="1" fill="#f6be2c"/><circle cx="607.5" cy="154.7" r="2.2" fill="#f4aa28"/><circle cx="630.2" cy="154.7" r="2.2" fill="#eed032"/><rect x="594.3" y="160.2" width="3.6" height="7.5" rx="1" fill="#f4aa28"/><circle cx="626.4" cy="162" r="2.2" fill="#eed032"/><rect x="605.7" y="164" width="3.6" height="14.9" rx="1" fill="#f4aa28"/><rect x="609.4" y="171.4" width="3.6" height="7.5" rx="1" fill="#f4aa28"/><rect x="624.6" y="167.7" width="7.4" height="3.8" rx="1" fill="#a8c048"/><circle cx="626.4" cy="173.2" r="2.2" fill="#a8c048"/><rect x="662.2" y="60.3" width="60.6" height="118.4" fill="none" stroke="#a4a29c" stroke-width="1"/><text x="865.6" y="56" font-size="11" fill="#c4c4c4" stroke="#c4c4c4" stroke-width="0.2" text-anchor="middle" transform="translate(0 0) scale(0.8 1)">1</text><circle cx="679.2" cy="88" r="2.2" fill="#eed032"/><circle cx="713.3" cy="84.3" r="2.2" fill="#eed032"/><circle cx="667.9" cy="117.6" r="2.2" fill="#eed032"/><rect x="730.2" y="60.3" width="60.6" height="118.4" fill="none" stroke="#a4a29c" stroke-width="1"/><text x="950.6" y="56" font-size="11" fill="#c4c4c4" stroke="#c4c4c4" stroke-width="0.2" text-anchor="middle" transform="translate(0 0) scale(0.8 1)">2</text><circle cx="777.5" cy="80.6" r="2.2" fill="#f4aa28"/><circle cx="788.9" cy="102.8" r="2.2" fill="#eed032"/><circle cx="732.1" cy="106.5" r="2.2" fill="#78d0e8"/><circle cx="743.5" cy="128.8" r="2.2" fill="#eed032"/><circle cx="788.9" cy="128.8" r="2.2" fill="#eed032"/><circle cx="777.5" cy="143.5" r="2.2" fill="#eed032"/><circle cx="777.5" cy="151" r="2.2" fill="#eed032"/><rect x="756.8" y="164" width="3.6" height="7.5" rx="1" fill="#f4aa28"/><circle cx="773.8" cy="165.8" r="2.2" fill="#a8c048"/><rect x="798.2" y="60.3" width="60.6" height="118.4" fill="none" stroke="#a4a29c" stroke-width="1"/><text x="1035.6" y="56" font-size="11" fill="#c4c4c4" stroke="#c4c4c4" stroke-width="0.2" text-anchor="middle" transform="translate(0 0) scale(0.8 1)">3</text><circle cx="838" cy="65.8" r="2.2" fill="#e8f0f0"/><circle cx="807.7" cy="73.2" r="2.2" fill="#eed032"/><circle cx="838" cy="73.2" r="2.2" fill="#eed032"/><circle cx="853.1" cy="69.5" r="2.2" fill="#eed032"/><circle cx="800.1" cy="84.3" r="2.2" fill="#eed032"/><circle cx="834.2" cy="95.4" r="2.2" fill="#eed032"/><circle cx="841.8" cy="121.3" r="2.2" fill="#eed032"/><circle cx="826.6" cy="169.5" r="2.2" fill="#e8f0f0"/><rect x="866.2" y="60.3" width="60.6" height="118.4" fill="none" stroke="#a4a29c" stroke-width="1"/><text x="1120.6" y="56" font-size="11" fill="#c4c4c4" stroke="#c4c4c4" stroke-width="0.2" text-anchor="middle" transform="translate(0 0) scale(0.8 1)">4</text><rect x="915.5" y="71.5" width="3.6" height="7.5" rx="1" fill="#eed032"/><circle cx="898.4" cy="91.8" r="2.2" fill="#eed032"/><circle cx="906" cy="102.8" r="2.2" fill="#eed032"/><circle cx="879.5" cy="128.8" r="2.2" fill="#eed032"/><circle cx="898.4" cy="136.2" r="2.2" fill="#eed032"/><circle cx="921.1" cy="132.4" r="2.2" fill="#eed032"/><circle cx="917.3" cy="143.5" r="2.2" fill="#eed032"/><circle cx="902.2" cy="151" r="2.2" fill="#eed032"/><circle cx="898.4" cy="173.2" r="2.2" fill="#eed032"/><rect x="934.2" y="60.3" width="60.6" height="118.4" fill="none" stroke="#a4a29c" stroke-width="1"/><text x="1205.6" y="56" font-size="11" fill="#c4c4c4" stroke="#c4c4c4" stroke-width="0.2" text-anchor="middle" transform="translate(0 0) scale(0.8 1)">5</text><circle cx="943.7" cy="80.6" r="2.2" fill="#e8f0f0"/><circle cx="962.6" cy="80.6" r="2.2" fill="#e85030"/><circle cx="958.8" cy="91.8" r="2.2" fill="#eed032"/><circle cx="977.8" cy="91.8" r="2.2" fill="#5878e8"/><circle cx="989.1" cy="113.9" r="2.2" fill="#eed032"/><circle cx="985.3" cy="125" r="2.2" fill="#eed032"/><circle cx="977.8" cy="154.7" r="2.2" fill="#eed032"/><circle cx="977.8" cy="169.5" r="2.2" fill="#eed032"/><rect x="1002.2" y="60.3" width="60.6" height="118.4" fill="none" stroke="#a4a29c" stroke-width="1"/><text x="1290.6" y="56" font-size="11" fill="#c4c4c4" stroke="#c4c4c4" stroke-width="0.2" text-anchor="middle" transform="translate(0 0) scale(0.8 1)">6</text><circle cx="1053.3" cy="80.6" r="2.2" fill="#eed032"/><circle cx="1038.2" cy="91.8" r="2.2" fill="#eed032"/><circle cx="1045.8" cy="106.5" r="2.2" fill="#eed032"/><circle cx="1038.2" cy="110.2" r="2.2" fill="#eed032"/><circle cx="1007.9" cy="117.6" r="2.2" fill="#eed032"/><circle cx="1030.6" cy="173.2" r="2.2" fill="#78d838"/><circle cx="1034.4" cy="176.8" r="2.2" fill="#78d838"/><rect x="1070.2" y="60.3" width="60.6" height="118.4" fill="none" stroke="#a4a29c" stroke-width="1"/><text x="1375.6" y="56" font-size="11" fill="#c4c4c4" stroke="#c4c4c4" stroke-width="0.2" text-anchor="middle" transform="translate(0 0) scale(0.8 1)">7</text><circle cx="1087.2" cy="65.8" r="2.2" fill="#78d0e8"/><rect x="1074.1" y="93.6" width="11.2" height="3.8" rx="1" fill="#eed032"/><circle cx="1128.9" cy="95.4" r="2.2" fill="#e8f0f0"/><circle cx="1113.8" cy="102.8" r="2.2" fill="#eed032"/><circle cx="1083.5" cy="151" r="2.2" fill="#eed032"/><circle cx="1091" cy="147.2" r="2.2" fill="#eed032"/><circle cx="1091" cy="154.7" r="2.2" fill="#eed032"/><circle cx="1128.9" cy="162" r="2.2" fill="#eed032"/><rect x="1138.2" y="60.3" width="60.6" height="118.4" fill="none" stroke="#a4a29c" stroke-width="1"/><text x="1460.6" y="56" font-size="11" fill="#c4c4c4" stroke="#c4c4c4" stroke-width="0.2" text-anchor="middle" transform="translate(0 0) scale(0.8 1)">8</text><rect x="1145.9" y="71.5" width="3.6" height="11.2" rx="1" fill="#40c8a0"/><circle cx="1170.4" cy="73.2" r="2.2" fill="#e8f0f0"/><circle cx="1155.2" cy="121.3" r="2.2" fill="#eed032"/><circle cx="1181.8" cy="162" r="2.2" fill="#78d0e8"/><circle cx="1181.8" cy="173.2" r="2.2" fill="#eed032"/><circle cx="1147.7" cy="176.8" r="2.2" fill="#eed032"/><rect x="1206.2" y="60.3" width="60.6" height="118.4" fill="none" stroke="#a4a29c" stroke-width="1"/><text x="1545.6" y="56" font-size="11" fill="#c4c4c4" stroke="#c4c4c4" stroke-width="0.2" text-anchor="middle" transform="translate(0 0) scale(0.8 1)">9</text><circle cx="1238.4" cy="62.1" r="2.2" fill="#78d0e8"/><circle cx="1208.1" cy="102.8" r="2.2" fill="#eed032"/><circle cx="1219.5" cy="147.2" r="2.2" fill="#eed032"/><circle cx="1211.9" cy="151" r="2.2" fill="#eed032"/><circle cx="1211.9" cy="169.5" r="2.2" fill="#eed032"/><circle cx="1264.9" cy="162" r="2.2" fill="#e8f0f0"/><circle cx="1261.1" cy="176.8" r="2.2" fill="#78d838"/><rect x="594.2" y="202.2" width="60.6" height="118.4" fill="none" stroke="#a4a29c" stroke-width="1"/><text x="780.6" y="197.9" font-size="11" fill="#c4c4c4" stroke="#c4c4c4" stroke-width="0.2" text-anchor="middle" transform="translate(0 0) scale(0.8 1)">10</text><circle cx="637.8" cy="204" r="2.2" fill="#78d838"/><circle cx="634" cy="207.7" r="2.2" fill="#78d838"/><rect x="636" y="209.7" width="3.6" height="11.2" rx="1" fill="#5878e8"/><circle cx="618.8" cy="211.4" r="2.2" fill="#eed032"/><circle cx="599.9" cy="215.1" r="2.2" fill="#eed032"/><rect x="651.1" y="220.8" width="3.6" height="7.5" rx="1" fill="#a8c048"/><circle cx="603.7" cy="237.3" r="2.2" fill="#eed032"/><circle cx="618.8" cy="237.3" r="2.2" fill="#eed032"/><circle cx="641.5" cy="241" r="2.2" fill="#eed032"/><circle cx="652.9" cy="244.7" r="2.2" fill="#a8c048"/><circle cx="603.7" cy="255.8" r="2.2" fill="#e8f0f0"/><circle cx="603.7" cy="281.8" r="2.2" fill="#eed032"/><circle cx="599.9" cy="296.6" r="2.2" fill="#eed032"/><circle cx="649.1" cy="300.2" r="2.2" fill="#eed032"/><rect x="662.2" y="202.2" width="60.6" height="118.4" fill="none" stroke="#a4a29c" stroke-width="1"/><text x="865.6" y="197.9" font-size="11" fill="#c4c4c4" stroke="#c4c4c4" stroke-width="0.2" text-anchor="middle" transform="translate(0 0) scale(0.8 1)">11</text><circle cx="709.5" cy="226.2" r="2.2" fill="#eed032"/><rect x="707.7" y="239.2" width="3.6" height="7.5" rx="1" fill="#a8c048"/><circle cx="713.3" cy="255.8" r="2.2" fill="#a8c048"/><circle cx="679.2" cy="270.7" r="2.2" fill="#eed032"/><circle cx="720.9" cy="278.1" r="2.2" fill="#eed032"/><circle cx="679.2" cy="304" r="2.2" fill="#eed032"/><circle cx="720.9" cy="318.8" r="2.2" fill="#eed032"/><rect x="730.2" y="202.2" width="60.6" height="118.4" fill="none" stroke="#a4a29c" stroke-width="1"/><text x="950.6" y="197.9" font-size="11" fill="#c4c4c4" stroke="#c4c4c4" stroke-width="0.2" text-anchor="middle" transform="translate(0 0) scale(0.8 1)">12</text><circle cx="754.8" cy="204" r="2.2" fill="#eed032"/><circle cx="785.1" cy="204" r="2.2" fill="#eed032"/><circle cx="747.2" cy="222.5" r="2.2" fill="#78d0e8"/><circle cx="751" cy="226.2" r="2.2" fill="#78d0e8"/><circle cx="758.6" cy="229.9" r="2.2" fill="#a8c048"/><circle cx="754.8" cy="233.6" r="2.2" fill="#eed032"/><circle cx="747.2" cy="241" r="2.2" fill="#eed032"/><circle cx="777.5" cy="252.1" r="2.2" fill="#e8f0f0"/><circle cx="788.9" cy="318.8" r="2.2" fill="#eed032"/><rect x="798.2" y="202.2" width="60.6" height="118.4" fill="none" stroke="#a4a29c" stroke-width="1"/><text x="1035.6" y="197.9" font-size="11" fill="#c4c4c4" stroke="#c4c4c4" stroke-width="0.2" text-anchor="middle" transform="translate(0 0) scale(0.8 1)">13</text><circle cx="830.4" cy="207.7" r="2.2" fill="#78d838"/><circle cx="841.8" cy="218.8" r="2.2" fill="#eed032"/><circle cx="841.8" cy="248.4" r="2.2" fill="#a8c048"/><circle cx="849.3" cy="252.1" r="2.2" fill="#eed032"/><circle cx="830.4" cy="259.6" r="2.2" fill="#eed032"/><circle cx="841.8" cy="259.6" r="2.2" fill="#eed032"/><circle cx="849.3" cy="267" r="2.2" fill="#eed032"/><circle cx="815.2" cy="278.1" r="2.2" fill="#eed032"/><circle cx="841.8" cy="285.5" r="2.2" fill="#a8c048"/><circle cx="853.1" cy="289.2" r="2.2" fill="#eed032"/><circle cx="826.6" cy="296.6" r="2.2" fill="#eed032"/><circle cx="830.4" cy="311.4" r="2.2" fill="#eed032"/><circle cx="845.5" cy="318.8" r="2.2" fill="#eed032"/><rect x="866.2" y="202.2" width="60.6" height="118.4" fill="none" stroke="#a4a29c" stroke-width="1"/><text x="1120.6" y="197.9" font-size="11" fill="#c4c4c4" stroke="#c4c4c4" stroke-width="0.2" text-anchor="middle" transform="translate(0 0) scale(0.8 1)">14</text><circle cx="868.1" cy="204" r="2.2" fill="#a8c048"/><circle cx="868.1" cy="211.4" r="2.2" fill="#eed032"/><circle cx="917.3" cy="211.4" r="2.2" fill="#78d0e8"/><circle cx="924.9" cy="215.1" r="2.2" fill="#78d838"/><circle cx="909.8" cy="237.3" r="2.2" fill="#78d0e8"/><circle cx="887" cy="278.1" r="2.2" fill="#e85030"/><circle cx="902.2" cy="292.9" r="2.2" fill="#eed032"/><circle cx="909.8" cy="296.6" r="2.2" fill="#eed032"/><circle cx="898.4" cy="315.1" r="2.2" fill="#e8f0f0"/><rect x="934.2" y="202.2" width="60.6" height="118.4" fill="none" stroke="#a4a29c" stroke-width="1"/><text x="1205.6" y="197.9" font-size="11" fill="#c4c4c4" stroke="#c4c4c4" stroke-width="0.2" text-anchor="middle" transform="translate(0 0) scale(0.8 1)">15</text><circle cx="955" cy="218.8" r="2.2" fill="#e8f0f0"/><circle cx="974" cy="229.9" r="2.2" fill="#eed032"/><rect x="953.2" y="250.3" width="7.4" height="3.8" rx="1" fill="#40c8a0"/><circle cx="992.9" cy="292.9" r="2.2" fill="#eed032"/><circle cx="992.9" cy="300.2" r="2.2" fill="#a8c048"/><circle cx="970.2" cy="307.7" r="2.2" fill="#e8f0f0"/><rect x="1002.2" y="202.2" width="60.6" height="118.4" fill="none" stroke="#a4a29c" stroke-width="1"/><text x="1290.6" y="197.9" font-size="11" fill="#c4c4c4" stroke="#c4c4c4" stroke-width="0.2" text-anchor="middle" transform="translate(0 0) scale(0.8 1)">16</text><circle cx="1007.9" cy="204" r="2.2" fill="#e8f0f0"/><circle cx="1049.5" cy="207.7" r="2.2" fill="#eed032"/><circle cx="1004.1" cy="226.2" r="2.2" fill="#eed032"/><circle cx="1019.2" cy="226.2" r="2.2" fill="#eed032"/><circle cx="1045.8" cy="233.6" r="2.2" fill="#eed032"/><circle cx="1057.1" cy="252.1" r="2.2" fill="#a8c048"/><circle cx="1045.8" cy="255.8" r="2.2" fill="#eed032"/><circle cx="1011.7" cy="274.4" r="2.2" fill="#eed032"/><circle cx="1042" cy="274.4" r="2.2" fill="#78d0e8"/><circle cx="1004.1" cy="278.1" r="2.2" fill="#eed032"/><circle cx="1049.5" cy="278.1" r="2.2" fill="#eed032"/><circle cx="1015.5" cy="285.5" r="2.2" fill="#eed032"/><circle cx="1045.8" cy="296.6" r="2.2" fill="#78d0e8"/><circle cx="1030.6" cy="300.2" r="2.2" fill="#eed032"/><rect x="1070.2" y="202.2" width="60.6" height="118.4" fill="none" stroke="#a4a29c" stroke-width="1"/><text x="1375.6" y="197.9" font-size="11" fill="#c4c4c4" stroke="#c4c4c4" stroke-width="0.2" text-anchor="middle" transform="translate(0 0) scale(0.8 1)">17</text><rect x="1100.6" y="202.2" width="11.2" height="3.8" rx="1" fill="#f6be2c"/><circle cx="1106.2" cy="207.7" r="2.2" fill="#f6be2c"/><rect x="1085.4" y="209.7" width="3.6" height="7.5" rx="1" fill="#f4aa28"/><rect x="1074.1" y="217.1" width="11.2" height="3.8" rx="1" fill="#f4aa28"/><circle cx="1098.6" cy="218.8" r="2.2" fill="#eed032"/><rect x="1104.4" y="220.8" width="3.6" height="14.9" rx="1" fill="#f4aa28"/><rect x="1127.1" y="209.7" width="3.6" height="7.5" rx="1" fill="#78d0e8"/><circle cx="1075.9" cy="229.9" r="2.2" fill="#a8c048"/><circle cx="1117.5" cy="229.9" r="2.2" fill="#78d838"/><circle cx="1087.2" cy="233.6" r="2.2" fill="#f4aa28"/><circle cx="1075.9" cy="237.3" r="2.2" fill="#f4aa28"/><circle cx="1128.9" cy="233.6" r="2.2" fill="#78d0e8"/><circle cx="1087.2" cy="241" r="2.2" fill="#f4aa28"/><circle cx="1091" cy="248.4" r="2.2" fill="#f4aa28"/><rect x="1104.4" y="242.9" width="3.6" height="7.5" rx="1" fill="#f4aa28"/><circle cx="1117.5" cy="252.1" r="2.2" fill="#eed032"/><circle cx="1128.9" cy="248.4" r="2.2" fill="#78d0e8"/><circle cx="1128.9" cy="255.8" r="2.2" fill="#78d0e8"/><rect x="1081.7" y="250.3" width="3.6" height="7.5" rx="1" fill="#f4aa28"/><circle cx="1094.8" cy="255.8" r="2.2" fill="#eed032"/><circle cx="1079.7" cy="259.6" r="2.2" fill="#eed032"/><circle cx="1091" cy="259.6" r="2.2" fill="#eed032"/><rect x="1104.4" y="254.1" width="3.6" height="11.2" rx="1" fill="#f6be2c"/><circle cx="1117.5" cy="267" r="2.2" fill="#78d838"/><circle cx="1075.9" cy="270.7" r="2.2" fill="#f4aa28"/><rect x="1089.2" y="272.6" width="7.4" height="3.8" rx="1" fill="#f4aa28"/><circle cx="1091" cy="278.1" r="2.2" fill="#f4aa28"/><rect x="1089.2" y="279.9" width="7.4" height="3.8" rx="1" fill="#f4aa28"/><circle cx="1106.2" cy="274.4" r="2.2" fill="#f4aa28"/><circle cx="1113.8" cy="274.4" r="2.2" fill="#f4aa28"/><rect x="1119.5" y="272.6" width="3.6" height="11.2" rx="1" fill="#f4aa28"/><circle cx="1075.9" cy="278.1" r="2.2" fill="#eed032"/><rect x="1104.4" y="276.2" width="3.6" height="14.9" rx="1" fill="#f4aa28"/><circle cx="1079.7" cy="285.5" r="2.2" fill="#eed032"/><rect x="1089.2" y="287.4" width="7.4" height="3.8" rx="1" fill="#f4aa28"/><circle cx="1091" cy="292.9" r="2.2" fill="#f4aa28"/><circle cx="1094.8" cy="296.6" r="2.2" fill="#78d0e8"/><rect x="1104.4" y="294.8" width="3.6" height="11.2" rx="1" fill="#f4aa28"/><circle cx="1087.2" cy="304" r="2.2" fill="#eed032"/><rect x="1085.4" y="305.9" width="3.6" height="11.2" rx="1" fill="#eed032"/><rect x="1089.2" y="313.2" width="7.4" height="3.8" rx="1" fill="#eed032"/><circle cx="1094.8" cy="307.7" r="2.2" fill="#eed032"/><circle cx="1098.6" cy="315.1" r="2.2" fill="#eed032"/><circle cx="1113.8" cy="311.4" r="2.2" fill="#eed032"/><rect x="1138.2" y="202.2" width="60.6" height="118.4" fill="none" stroke="#a4a29c" stroke-width="1"/><text x="1460.6" y="197.9" font-size="11" fill="#c4c4c4" stroke="#c4c4c4" stroke-width="0.2" text-anchor="middle" transform="translate(0 0) scale(0.8 1)">18</text><circle cx="1147.7" cy="204" r="2.2" fill="#f4aa28"/><rect x="1153.4" y="202.2" width="7.4" height="3.8" rx="1" fill="#f4aa28"/><rect x="1157.2" y="205.9" width="11.2" height="3.8" rx="1" fill="#f4aa28"/><rect x="1149.7" y="209.7" width="11.2" height="3.8" rx="1" fill="#f4aa28"/><circle cx="1166.6" cy="211.4" r="2.2" fill="#f4aa28"/><circle cx="1178" cy="211.4" r="2.2" fill="#f4aa28"/><circle cx="1155.2" cy="215.1" r="2.2" fill="#f4aa28"/><rect x="1164.8" y="213.3" width="14.9" height="3.8" rx="1" fill="#f4aa28"/><circle cx="1155.2" cy="218.8" r="2.2" fill="#f4aa28"/><circle cx="1166.6" cy="222.5" r="2.2" fill="#f4aa28"/><circle cx="1147.7" cy="226.2" r="2.2" fill="#f4aa28"/><circle cx="1162.8" cy="226.2" r="2.2" fill="#f4aa28"/><circle cx="1178" cy="229.9" r="2.2" fill="#f4aa28"/><circle cx="1151.5" cy="233.6" r="2.2" fill="#f4aa28"/><circle cx="1159" cy="233.6" r="2.2" fill="#f4aa28"/><circle cx="1166.6" cy="233.6" r="2.2" fill="#f4aa28"/><circle cx="1178" cy="233.6" r="2.2" fill="#f4aa28"/><circle cx="1162.8" cy="241" r="2.2" fill="#f4aa28"/><rect x="1168.6" y="239.2" width="7.4" height="3.8" rx="1" fill="#f4aa28"/><circle cx="1147.7" cy="244.7" r="2.2" fill="#e8902a"/><rect x="1153.4" y="242.9" width="11.2" height="3.8" rx="1" fill="#e8902a"/><circle cx="1178" cy="244.7" r="2.2" fill="#e8902a"/><rect x="1149.7" y="246.7" width="14.9" height="3.8" rx="1" fill="#e8902a"/><circle cx="1174.2" cy="248.4" r="2.2" fill="#e8902a"/><circle cx="1178" cy="248.4" r="2.2" fill="#e8902a"/><rect x="1145.9" y="250.3" width="18.7" height="3.8" rx="1" fill="#e8902a"/><circle cx="1178" cy="252.1" r="2.2" fill="#e8902a"/><rect x="1153.4" y="254.1" width="11.2" height="3.8" rx="1" fill="#e8902a"/><circle cx="1178" cy="255.8" r="2.2" fill="#e8902a"/><rect x="1153.4" y="257.8" width="11.2" height="3.8" rx="1" fill="#e8902a"/><rect x="1149.7" y="261.4" width="14.9" height="3.8" rx="1" fill="#e8902a"/><circle cx="1178" cy="263.2" r="2.2" fill="#e8902a"/><rect x="1149.7" y="265.2" width="14.9" height="3.8" rx="1" fill="#e8902a"/><rect x="1149.7" y="268.9" width="7.4" height="3.8" rx="1" fill="#f4aa28"/><circle cx="1189.3" cy="270.7" r="2.2" fill="#f4aa28"/><circle cx="1162.8" cy="278.1" r="2.2" fill="#f4aa28"/><circle cx="1174.2" cy="278.1" r="2.2" fill="#f4aa28"/><rect x="1172.4" y="279.9" width="7.4" height="3.8" rx="1" fill="#f4aa28"/><circle cx="1147.7" cy="285.5" r="2.2" fill="#f4aa28"/><circle cx="1155.2" cy="285.5" r="2.2" fill="#f4aa28"/><circle cx="1162.8" cy="285.5" r="2.2" fill="#f4aa28"/><rect x="1168.6" y="283.7" width="11.2" height="3.8" rx="1" fill="#f4aa28"/><circle cx="1189.3" cy="285.5" r="2.2" fill="#f4aa28"/><circle cx="1155.2" cy="289.2" r="2.2" fill="#f4aa28"/><circle cx="1178" cy="289.2" r="2.2" fill="#f4aa28"/><circle cx="1147.7" cy="292.9" r="2.2" fill="#f4aa28"/><rect x="1157.2" y="291.1" width="11.2" height="3.8" rx="1" fill="#f4aa28"/><circle cx="1147.7" cy="296.6" r="2.2" fill="#f4aa28"/><circle cx="1155.2" cy="296.6" r="2.2" fill="#f4aa28"/><rect x="1157.2" y="294.8" width="7.4" height="3.8" rx="1" fill="#f4aa28"/><circle cx="1174.2" cy="296.6" r="2.2" fill="#f4aa28"/><rect x="1157.2" y="298.4" width="7.4" height="3.8" rx="1" fill="#f4aa28"/><rect x="1172.4" y="298.4" width="7.4" height="3.8" rx="1" fill="#f4aa28"/><rect x="1149.7" y="302.2" width="14.9" height="3.8" rx="1" fill="#f4aa28"/><circle cx="1174.2" cy="304" r="2.2" fill="#f4aa28"/><rect x="1149.7" y="305.9" width="11.2" height="3.8" rx="1" fill="#f4aa28"/><rect x="1145.9" y="309.6" width="11.2" height="3.8" rx="1" fill="#f4aa28"/><circle cx="1162.8" cy="311.4" r="2.2" fill="#f4aa28"/><circle cx="1174.2" cy="311.4" r="2.2" fill="#f4aa28"/><rect x="1145.9" y="313.2" width="18.7" height="3.8" rx="1" fill="#f4aa28"/><rect x="1172.4" y="313.2" width="7.4" height="3.8" rx="1" fill="#f4aa28"/><rect x="1176.2" y="316.9" width="7.4" height="3.8" rx="1" fill="#f4aa28"/><circle cx="1147.7" cy="215.1" r="2.2" fill="#78d838"/><circle cx="1155.2" cy="207.7" r="2.2" fill="#78d838"/><circle cx="1151.5" cy="211.4" r="2.2" fill="#eed032"/><circle cx="1178" cy="248.4" r="2.2" fill="#a8c048"/><circle cx="1178" cy="255.8" r="2.2" fill="#a8c048"/><rect x="1206.2" y="202.2" width="60.6" height="118.4" fill="none" stroke="#a4a29c" stroke-width="1"/><text x="1545.6" y="197.9" font-size="11" fill="#c4c4c4" stroke="#c4c4c4" stroke-width="0.2" text-anchor="middle" transform="translate(0 0) scale(0.8 1)">19</text>

<!-- ============ FLAT MAP WINDOW ============ -->
<rect x="570" y="360" width="710" height="16" fill="url(#tb)"/>
<circle cx="580" cy="368" r="3.6" fill="#e6ecf0" stroke="#9aa4ac" stroke-width="1.1"/><circle cx="595" cy="368" r="3.6" fill="#e6ecf0" stroke="#9aa4ac" stroke-width="1.1"/><circle cx="609.8" cy="368" r="3.6" fill="#e6ecf0" stroke="#9aa4ac" stroke-width="1.1"/>
<text x="910" y="372.3" font-size="10.2" fill="#2e2e34" stroke="#2e2e34" stroke-width="0.35">Flat Map</text>
<path d="M896 362.5 l7 10" stroke="#707880" stroke-width="1.6" fill="none"/><path d="M903 362.5 l-6 10" stroke="#a0a8b0" stroke-width="0.8" fill="none"/>
<rect x="570.7" y="376" width="10.3" height="397" fill="#acacac"/>
<rect x="572" y="626" width="8" height="32" fill="#d4d4d4"/>
<rect x="572" y="399" width="7.5" height="9" fill="#dcdcdc"/><path d="M573 407.5 L579.5 404.5" stroke="#404040" stroke-width="1.2"/>
<rect x="572" y="764" width="8" height="9" fill="#dadada"/>
<rect x="1278" y="376" width="2" height="397" fill="#9a9a9a"/>
<rect x="1271" y="761" width="9" height="12" fill="#f2f2f2"/>
<rect x="570" y="376" width="42" height="22" fill="#fdf0dc"/>
<text x="580.5" y="391.5" font-size="11" fill="#3a3026" stroke="#3a3026" stroke-width="0.4">View</text>
<path d="M584.6 628.1L605.6 591.8M584.6 628.1L605.6 664.4M584.6 628.1L626.6 628.1M605.6 591.8L626.6 555.5M605.6 591.8L626.6 628.1M605.6 591.8L647.6 591.8M605.6 664.4L626.6 628.1M605.6 664.4L626.6 700.7M605.6 664.4L647.6 664.4M626.6 555.5L647.6 519.2M626.6 555.5L647.6 591.8M626.6 555.5L668.6 555.5M626.6 628.1L647.6 591.8M626.6 628.1L647.6 664.4M626.6 628.1L668.6 628.1M626.6 700.7L647.6 664.4M626.6 700.7L647.6 737M626.6 700.7L668.6 700.7M647.6 519.2L668.6 482.9M647.6 519.2L668.6 555.5M647.6 519.2L689.6 519.2M647.6 591.8L668.6 555.5M647.6 591.8L668.6 628.1M647.6 591.8L689.6 591.8M647.6 664.4L668.6 628.1M647.6 664.4L668.6 700.7M647.6 664.4L689.6 664.4M647.6 737L668.6 700.7M668.6 482.9L689.6 446.6M668.6 482.9L689.6 519.2M668.6 482.9L710.6 482.9M668.6 555.5L689.6 519.2M668.6 555.5L689.6 591.8M668.6 555.5L710.6 555.5M668.6 628.1L689.6 591.8M668.6 628.1L689.6 664.4M668.6 628.1L710.6 628.1M668.6 700.7L689.6 664.4M689.6 446.6L710.6 410.3M689.6 446.6L710.6 482.9M689.6 446.6L731.6 446.6M689.6 519.2L710.6 482.9M689.6 519.2L710.6 555.5M689.6 519.2L731.6 519.2M689.6 591.8L710.6 555.5M689.6 591.8L710.6 628.1M689.6 591.8L731.6 591.8M689.6 664.4L710.6 628.1M710.6 410.3L731.6 446.6M710.6 482.9L731.6 446.6M710.6 482.9L731.6 519.2M710.6 482.9L752.6 482.9M710.6 555.5L731.6 519.2M710.6 555.5L731.6 591.8M710.6 555.5L752.6 555.5M710.6 628.1L731.6 591.8M710.6 628.1L731.6 664.4M710.6 628.1L752.6 628.1M731.6 446.6L752.6 482.9M731.6 519.2L752.6 482.9M731.6 519.2L752.6 555.5M731.6 519.2L773.6 519.2M731.6 591.8L752.6 555.5M731.6 591.8L752.6 628.1M731.6 591.8L773.6 591.8M731.6 664.4L752.6 628.1M731.6 664.4L752.6 700.7M731.6 664.4L773.6 664.4M752.6 482.9L773.6 519.2M752.6 555.5L773.6 519.2M752.6 555.5L773.6 591.8M752.6 555.5L794.6 555.5M752.6 628.1L773.6 591.8M752.6 628.1L773.6 664.4M752.6 628.1L794.6 628.1M752.6 700.7L773.6 664.4M752.6 700.7L773.6 737M752.6 700.7L794.6 700.7M773.6 519.2L794.6 482.9M773.6 519.2L794.6 555.5M773.6 519.2L815.6 519.2M773.6 591.8L794.6 555.5M773.6 591.8L794.6 628.1M773.6 591.8L815.6 591.8M773.6 664.4L794.6 628.1M773.6 664.4L794.6 700.7M773.6 664.4L815.6 664.4M773.6 737L794.6 700.7M794.6 482.9L815.6 446.6M794.6 482.9L815.6 519.2M794.6 482.9L836.6 482.9M794.6 555.5L815.6 519.2M794.6 555.5L815.6 591.8M794.6 555.5L836.6 555.5M794.6 628.1L815.6 591.8M794.6 628.1L815.6 664.4M794.6 628.1L836.6 628.1M794.6 700.7L815.6 664.4M815.6 446.6L836.6 410.3M815.6 446.6L836.6 482.9M815.6 446.6L857.5 446.6M815.6 519.2L836.6 482.9M815.6 519.2L836.6 555.5M815.6 519.2L857.5 519.2M815.6 591.8L836.6 555.5M815.6 591.8L836.6 628.1M815.6 591.8L857.5 591.8M815.6 664.4L836.6 628.1M836.5 628.1L857.5 591.8M836.5 628.1L857.5 664.4M836.5 628.1L878.5 628.1M836.6 410.3L857.5 446.6M836.6 482.9L857.5 446.6M836.6 482.9L857.5 519.2M836.6 482.9L878.5 482.9M836.6 555.5L857.5 519.2M836.6 555.5L857.5 591.8M836.6 555.5L878.5 555.5M836.6 628.1L857.5 591.8M857.5 446.6L878.5 482.9M857.5 519.2L878.5 482.9M857.5 519.2L878.5 555.5M857.5 519.2L899.5 519.2M857.5 591.8L878.5 555.5M857.5 591.8L878.5 628.1M857.5 591.8L899.5 591.8M857.5 664.4L878.5 628.1M857.5 664.4L878.5 700.7M857.5 664.4L899.5 664.4M878.5 482.9L899.5 519.2M878.5 555.5L899.5 519.2M878.5 555.5L899.5 591.8M878.5 555.5L920.5 555.5M878.5 628.1L899.5 591.8M878.5 628.1L899.5 664.4M878.5 628.1L920.5 628.1M878.5 700.7L899.5 664.4M878.5 700.7L899.5 737M878.5 700.7L920.5 700.7M899.5 519.2L920.5 482.9M899.5 519.2L920.5 555.5M899.5 519.2L941.5 519.2M899.5 591.8L920.5 555.5M899.5 591.8L920.5 628.1M899.5 591.8L941.5 591.8M899.5 664.4L920.5 628.1M899.5 664.4L920.5 700.7M899.5 664.4L941.5 664.4M899.5 737L920.5 700.7M920.5 482.9L941.5 446.6M920.5 482.9L941.5 519.2M920.5 482.9L962.5 482.9M920.5 555.5L941.5 519.2M920.5 555.5L941.5 591.8M920.5 555.5L962.5 555.5M920.5 628.1L941.5 591.8M920.5 628.1L941.5 664.4M920.5 628.1L962.5 628.1M920.5 700.7L941.5 664.4M941.5 446.6L962.5 410.3M941.5 446.6L962.5 482.9M941.5 446.6L983.5 446.6M941.5 519.2L962.5 482.9M941.5 519.2L962.5 555.5M941.5 519.2L983.5 519.2M941.5 591.8L962.5 555.5M941.5 591.8L962.5 628.1M941.5 591.8L983.5 591.8M941.5 664.4L962.5 628.1M962.5 410.3L983.5 446.6M962.5 482.9L983.5 446.6M962.5 482.9L983.5 519.2M962.5 482.9L1004.5 482.9M962.5 555.5L983.5 519.2M962.5 555.5L983.5 591.8M962.5 555.5L1004.5 555.5M962.5 628.1L983.5 591.8M962.5 628.1L983.5 664.4M962.5 628.1L1004.5 628.1M983.5 446.6L1004.5 482.9M983.5 519.2L1004.5 482.9M983.5 519.2L1004.5 555.5M983.5 519.2L1025.5 519.2M983.5 591.8L1004.5 555.5M983.5 591.8L1004.5 628.1M983.5 591.8L1025.5 591.8M983.5 664.4L1004.5 628.1M983.5 664.4L1004.5 700.7M983.5 664.4L1025.5 664.4M1004.5 482.9L1025.5 519.2M1004.5 555.5L1025.5 519.2M1004.5 555.5L1025.5 591.8M1004.5 555.5L1046.5 555.5M1004.5 628.1L1025.5 591.8M1004.5 628.1L1025.5 664.4M1004.5 628.1L1046.5 628.1M1004.5 700.7L1025.5 664.4M1004.5 700.7L1025.5 737M1004.5 700.7L1046.5 700.7M1025.5 519.2L1046.5 482.9M1025.5 519.2L1046.5 555.5M1025.5 519.2L1067.5 519.2M1025.5 591.8L1046.5 555.5M1025.5 591.8L1046.5 628.1M1025.5 591.8L1067.5 591.8M1025.5 664.4L1046.5 628.1M1025.5 664.4L1046.5 700.7M1025.5 664.4L1067.5 664.4M1025.5 737L1046.5 700.7M1046.5 482.9L1067.5 446.6M1046.5 482.9L1067.5 519.2M1046.5 482.9L1088.5 482.9M1046.5 555.5L1067.5 519.2M1046.5 555.5L1067.5 591.8M1046.5 555.5L1088.5 555.5M1046.5 628.1L1067.5 591.8M1046.5 628.1L1067.5 664.4M1046.5 628.1L1088.5 628.1M1046.5 700.7L1067.5 664.4M1067.5 446.6L1088.5 410.3M1067.5 446.6L1088.5 482.9M1067.5 446.6L1109.4 446.6M1067.5 519.2L1088.5 482.9M1067.5 519.2L1088.5 555.5M1067.5 519.2L1109.4 519.2M1067.5 591.8L1088.5 555.5M1067.5 591.8L1088.5 628.1M1067.5 591.8L1109.4 591.8M1067.5 664.4L1088.5 628.1M1088.5 410.3L1109.4 446.6M1088.5 482.9L1109.4 446.6M1088.5 482.9L1109.4 519.2M1088.5 482.9L1130.4 482.9M1088.5 555.5L1109.4 519.2M1088.5 555.5L1109.4 591.8M1088.5 555.5L1130.4 555.5M1088.5 628.1L1109.4 591.8M1088.5 628.1L1109.4 664.4M1088.5 628.1L1130.4 628.1M1109.4 446.6L1130.4 482.9M1109.4 519.2L1130.4 482.9M1109.4 519.2L1130.4 555.5M1109.4 519.2L1151.4 519.2M1109.4 591.8L1130.4 555.5M1109.4 591.8L1130.4 628.1M1109.4 591.8L1151.4 591.8M1109.4 664.4L1130.4 628.1M1109.4 664.4L1130.4 700.7M1109.4 664.4L1151.4 664.4M1130.4 482.9L1151.4 519.2M1130.4 555.5L1151.4 519.2M1130.4 555.5L1151.4 591.8M1130.4 555.5L1172.4 555.5M1130.4 628.1L1151.4 591.8M1130.4 628.1L1151.4 664.4M1130.4 628.1L1172.4 628.1M1130.4 700.7L1151.4 664.4M1130.4 700.7L1151.4 737M1130.4 700.7L1172.4 700.7M1151.4 519.2L1172.4 482.9M1151.4 519.2L1172.4 555.5M1151.4 519.2L1193.4 519.2M1151.4 591.8L1172.4 555.5M1151.4 591.8L1172.4 628.1M1151.4 591.8L1193.4 591.8M1151.4 664.4L1172.4 628.1M1151.4 664.4L1172.4 700.7M1151.4 664.4L1193.4 664.4M1151.4 737L1172.4 700.7M1172.4 482.9L1193.4 446.6M1172.4 482.9L1193.4 519.2M1172.4 482.9L1214.4 482.9M1172.4 555.5L1193.4 519.2M1172.4 555.5L1193.4 591.8M1172.4 555.5L1214.4 555.5M1172.4 628.1L1193.4 591.8M1172.4 628.1L1193.4 664.4M1172.4 628.1L1214.4 628.1M1172.4 700.7L1193.4 664.4M1193.4 446.6L1214.4 410.3M1193.4 446.6L1214.4 482.9M1193.4 446.6L1235.4 446.6M1193.4 519.2L1214.4 482.9M1193.4 519.2L1214.4 555.5M1193.4 519.2L1235.4 519.2M1193.4 591.8L1214.4 555.5M1193.4 591.8L1214.4 628.1M1193.4 591.8L1235.4 591.8M1193.4 664.4L1214.4 628.1M1214.4 410.3L1235.4 446.6M1214.4 482.9L1235.4 446.6M1214.4 482.9L1235.4 519.2M1214.4 482.9L1256.4 482.9M1214.4 555.5L1235.4 519.2M1214.4 555.5L1235.4 591.8M1214.4 555.5L1256.4 555.5M1214.4 628.1L1235.4 591.8M1235.4 446.6L1256.4 482.9M1235.4 519.2L1256.4 482.9M1235.4 519.2L1256.4 555.5M1235.4 519.2L1277.4 519.2M1235.4 591.8L1256.4 555.5M1256.4 482.9L1277.4 519.2M1256.4 555.5L1277.4 519.2" stroke="#a8a69a" stroke-width="1" fill="none"/>
<path d="M713.7 612.6l6.1 1.4M713.1 602.3l0.8 3.4M735.4 586.3l-1.6 3.8M736.4 582.3l-2.5 5.4M732.2 604.7l6.3 2.7M724.7 600l2 4.7M723.5 589.9l-5.8 4.8M716.1 592l2.6 2M736.9 615.7l-5.8 1.9M743.5 608.5l-6.2 4.3M709.3 595.7l-3.1 0.3M736.1 582.4l2.6 3.4M710.9 603.1l4.1 1M719 587.4l-7.4 0.8M736.7 584l-0.3 5.2M714.9 612.8l-3 3.5M740.5 597.6l4.3 0.5M722.1 587.9l-1.8 2.7M715.1 601.1l-3.2 7M727.2 588.9l7.1 1.5M721.8 611.7l4.1 3.8M741.2 608.8l2.6 1.9M745 603.4l-2.3 2.4M726.7 614.7l-3 1.6M703.8 601.9l3.5 3.8M742.6 601.9l4.5 1.6M725.5 597.7l-4.9 5M727.2 608.6l-2.9 3.3M745.4 605.3l-3 3.1M719.9 606.5l7 3M738.5 612.8l-3.9 1.2M740.2 611.6l1.6 3M748.8 608.3l-0.9 4.2M743.7 607.2l-3 4.7M713.7 595.3l5.1 4.6M724.8 602.8l-2.9 4.7M726.3 599.8l2 3.9M740.7 593.9l6.2 4.7M735.2 594.7l-4.2 2.8M725.5 592.2l3.1 0.6M726.5 607.9l-0.5 3.1M741.7 603.7l-3.4 4.3M744.1 607.7l-2 7.6M714.1 583.7l3.7 2.7M705.4 602.2l-0.5 3M705.9 597.4l-0.3 4.4M743.6 592.8l-4.5 3.1M751.1 596.1l-3.6 0.6M723.1 591.5l6.7 2.6M713 596.8l2.1 5.1M748.2 595.7l-7.3 0.1M736.9 610.8l-4.1 6.5M740.1 589.1l6.5 2.4M740.3 613.6l6.3 0.4" stroke="#c09a34" stroke-width="1.1" fill="none" stroke-linecap="round"/><path d="M691.4 594.3l2.2 0.3M769.1 588.8l3.2 0.5M709.7 573.7l0.4 2.9M779.8 608.6l-4 1.6M704.1 635l0.5 3.7M770.7 546.8l3.4 0.6M708.8 562.3l3.1 3.9M684.8 624.9l1.8 1M653.5 581.8l2.9 3.4M694.7 611.4l4.1 2.1M738.3 614.9l-1.2 4M645.3 572.1l-1.5 3.8M753.9 613.7l-0.7 1.9M790.5 532.9l3.3 0.9M751.2 613.6l2.4 1.4M770.9 603.4l-2.9 4M723.7 623.5l-0.3 2.5M733.2 577.1l-2.7 0.1M763.5 560.9l3.4 2.9M725.2 639.4l-4.8 1M746.2 574.4l3.8 1M683.8 549.6l0.3 4.3M755.1 641.2l-3 0.3M695 614.8l4.2 2.5M765.8 636.5l2.2 4.4M702.3 573.4l-4.4 1.9M727.6 633.9l2.5 1.1M756 586.5l-3.2 1M655.5 626l-0.3 3.5M744 624.2l2.2 3.6M726.7 618.8l-0.8 4.2M731 541.1l-0.1 3.3M670.7 595.3l0.2 3.3M776.5 583.8l3.2 3.4M744.5 663l-3.2 0.1M696.2 577.4l-1.7 1.4M732.9 579.2l-3.5 1M738.1 579.9l-0.8 3.7M753.2 577.9l-2.9 0.7M722.4 567l-2.5 0.5M779.7 628.9l-2.9 1.6M691.5 617.4l1.9 3.6M753 562.9l1.8 3.5M732 632.7l-1.7 3.2M763.5 576.2l3.8 1.8M685.7 594.3l-3.9 2.3M658.8 571l3 2.7M750.7 569.8l-2.1 3.3M741.5 638.7l1.8 4.6M672.8 603.2l-1.9 3.9M685.7 605.7l1.9 1.4M810.5 591.1l-1.7 1.1M738.8 633.1l-2.4 0.4M771.9 634.2l-2.1 2.8M699.1 645.1l-1.8 1M784.7 639l2.5 3.3M700 616.4l2.1 4.5M740.9 622l-4 2.7M673.3 556l-3.1 3.7M782.4 611.4l-1.5 3M694.9 604l-2.9 0.2M722.2 636.5l0.9 2.7M700 596.6l1.2 7.4M771.6 570.2l-0.2 3.2M754.4 620.7l3 2.4M724.9 619.1l-4.9 0.7M784.7 576.8l3.2 3.2M779.5 583.1l0.5 3.9M693.7 587.1l2.7 0.1M715.6 626.5l-4.6 1.7M701.3 601.2l-2.5 3.4M700.2 608.4l3 2.6M756.6 604.1l2.7 1.9M668 634.5l-4.7 0M756.1 589.4l-1.8 1.8M682.3 637.5l4.4 0.7M748.7 587.4l3.3 5.9M715.2 618.8l-1.9 0.5M644.3 601.5l-1.7 1.9M678.2 663l3.1 3.4M702.5 604l-2.6 4.3M712.1 631.5l2.5 1.8M726.9 617.7l-0.9 3.7M707.5 621.5l3.7 3.3M755.9 587.7l3.1 3.4M741.5 537.1l-0.9 2.2M700.4 610.2l1.6 2.4M696.7 590.1l-3.2 0M758.9 583.4l-4.2 1.6M675.5 554.9l0.9 2.1M766.5 594.4l0.7 2M730.5 624.8l3.8 2.5M692.7 584.5l0.8 3.9M732.3 571.3l2.4 0.8M752.5 618.8l-0.1 2.3M776.4 608.6l-1.7 1.4M718.5 551.2l0.1 2.6M804.4 584.2l-2.4 0.5M716.8 646.9l-2.4 0.6M676 591.4l-0.5 3M661.2 573l-0.9 2.1M675.7 627.3l-0.7 2.7M791 614.3l-2.8 0.1M757 628.5l-3.1 1.1M684.4 581.3l0.2 2.6M677.4 558.2l2.9 3.2" stroke="#b8a840" stroke-width="1.1" fill="none" stroke-linecap="round"/><path d="M743.7 581.8l2.1 3.1M693.6 622.9l1.7 1.3M706.8 642l-0.9 4M655.6 591.5l-4.2 0.3M753.5 616.1l0.1 4.3M726.2 623.6l0.7 4.6M769.9 566.5l3 1M742.2 619.7l1.9 1M740.1 615l4.4 1.8M813.7 607.5l-0.5 3.6M691.8 596.5l1.3 1.6M814.2 594.1l2.3 2M765.5 602.5l-2.1 1.5M680.9 594.1l-0.8 4.3M643.6 576.4l4.2 1.7M696.9 558.4l-2.9 3.7M770.6 602.6l1.7 2.9M714.3 618.4l-0 4.3M739.5 621.5l2.1 0.1M762 570.7l1.7 2.3M821.6 583.2l-3.6 0.4M713.6 621.7l0.2 2M700 597.7l3.7 4.1M756.1 613.2l1.2 1.7M711.9 547.7l-3.2 0.2M761.8 632.7l-3.4 1.9M682.8 597.9l-2.7 2.9M709.7 631l1.4 1.5M700.1 562.8l-0.2 4M765.9 594.1l-2.8 0.5M733.2 655.1l3.5 0M686 600.2l1.4 2.6M701 608.6l-1.9 1.1M707.3 658l-0.1 2.7M703.7 616.4l-2.2 0.2M769.1 556.2l-1.3 1.6M757.7 580.3l1.3 3.5M770.4 580.9l2 2.1M689.6 568.4l-0.2 2.3M744.9 559.1l-3.5 0.3M701.8 643.7l-2 1.8M700 660.4l2.7 2.3M679 616.9l1.6 4.6M747.3 668.2l2.4 0.5M777.3 606.3l1.6 2.7M690.7 602l2 4.3M714.6 663.3l-2.4 3M668.5 552.5l0.2 2.1M811.7 581.2l0.7 3.1M752.3 558.2l2.1 3.2M686.2 633.9l-1.6 1.6M726.9 548.7l-3.5 1.9M744.6 562.2l0.4 5M753.6 552.9l2.9 3.8M732.1 623.6l1.7 1.7M682.9 576.8l1.3 2.2M738.4 567.5l0.7 2.1M677.8 587.6l-1.3 1.9M707 613l6.6 0.1M769.1 578.1l-3.5 2.8M731.6 625.1l3.3 1.3M727.5 639.5l-0.9 4.6M688.6 578.9l1 3.8M776.7 604.1l-2.6 2.3M758.7 609l-4 1.4M730.5 619.3l5.5 0.6M688 632.8l-2.3 2.4M678.9 580.1l2.9 0.3M758.8 599.6l1.8 1.5M780.7 645.3l2.6 0.8" stroke="#a0b040" stroke-width="1.1" fill="none" stroke-linecap="round"/><path d="M786.9 594.6l-0.7 3.5M694.6 555.5l-4.6 0.9M720.9 682.5l4.1 0.6M692.1 608.8l4.8 0.9M780.2 595.8l-2.9 0.5M741.3 644.4l-0.1 4.4M731.9 566.6l1.9 2.8M813.9 617l-3.6 2.9M810.1 593.8l-2.7 2.8M718.4 545l2.1 1.8M722.2 601.7l2.3 4.1M693.6 514.3l-2 2.6M678.2 575.8l-3.2 2.5M717.4 651.8l-3.1 0.3M726.7 585.8l2.2 2.3M719.1 489.8l-2.4 2.5M749.4 564.6l3.8 3.6M676.2 542.4l-2.7 4.7M638.9 605.2l-3 4.1M655.7 616.3l-0.8 3.3M734.3 648.3l5.1 1.3M726 598.9l5 1.7M706.7 611.1l2.6 0.2M700.9 534.4l-2.7 3.8M776 612.3l2.1 4.5M759.6 511.3l5 1M813.4 539.8l2.9 1M733.3 598.1l-4.4 2.3M666.8 531.9l-1.4 3.1M739.7 602.1l-2.3 2.2M700.5 631.9l3.3 0.2M706.8 655.6l1.4 3.2M775.9 579.9l-3.9 2M767.1 598l1 4.7M682 644.3l-0.4 3.1M736 577.2l-2.5 1.6M754.2 590.4l-4 3.7M774.2 590.9l0.1 4.9M741.9 634.8l2.3 4.4M713.8 691.4l2 2.4M719.9 429.2l4.1 1.5M727.2 470.9l-2.8 4M700.7 516.8l1.1 3.5M645.1 555.4l-2.4 0.9M689 637l-3.8 1.2M657.4 702.5l2.9 2.6M841.9 431l-3.2 3.1M841.3 467.1l4.4 2.4M790 521.5l3.3 1.9M800.9 560l3.6 1.5M872.4 586.4l2.8 1.9M800.7 652.7l2.6 1.4M777.6 696.8l-0.2 3M830.6 536.7l-4.7 0.4M874.3 549.1l3.5 1.1M966.1 451.5l-2.5 2.8M970.5 480.9l2.9 1M928.1 533l1.5 4.6M1002.7 558.2l-1.6 3.6M1045.7 598.8l1.4 4.5M989.6 617l-1.1 4.6M1080.9 460.3l-3.3 3.9M1104.8 501l-4.1 2M1040.2 557.7l2.4 3.6M1117.8 557.7l-3.6 2.9M1170.8 565.6l0.9 3.8M1142.6 596.8l-2.8 4.5M1118.2 640.4l-2.8 2.4M1127.8 664.5l4.1 0.5M1188.6 462.4l-4 0.8M1196.3 478.4l-0.6 4.6M1211.9 500.4l-3.5 2.1M1227.3 493.1l3.6 2.8M1181.4 521.6l5.1 2M1237.4 524.2l2.4 2.8M1244.6 577l1.1 4.5M1176.7 591.1l3.6 3.1M1212.5 598.7l3.8 3.1M896.7 466.2l4.4 1.9M932.9 509.3l0.4 4.2M976.3 522.7l2 4M1023 521.5l0.3 3.4M1062 525.4l-3.1 1.8M882.9 636.2l1.2 3M936.9 556.8l4.7 0M1006.7 645.8l2.3 3.2M1240.1 469.8l-1.7 3.1M1221.8 458.1l4.9 0.9M1201.8 471.8l4.5 2.1M1158.7 580.1l5.4 0.2M1150.2 572l2.8 0.9M956.7 601.5l1.4 2.6M1091.8 591.6l4.5 2.6M852.4 610.6l-2.6 4.5M761 472.1l3.7 2.7M699.8 469.9l1 5.1" stroke="#a0b048" stroke-width="1.1" fill="none" stroke-linecap="round"/>
<path d="M0 0 H5 Q0 1 0 6 Z" fill="#3a3a3a"/>
<path d="M1280 0 H1274 Q1280 1 1280 6 Z" fill="#3a3a3a"/>
<path d="M566 0 H572 L569 3 Z" fill="#3a3a3a"/>
</svg>
</body></html>
